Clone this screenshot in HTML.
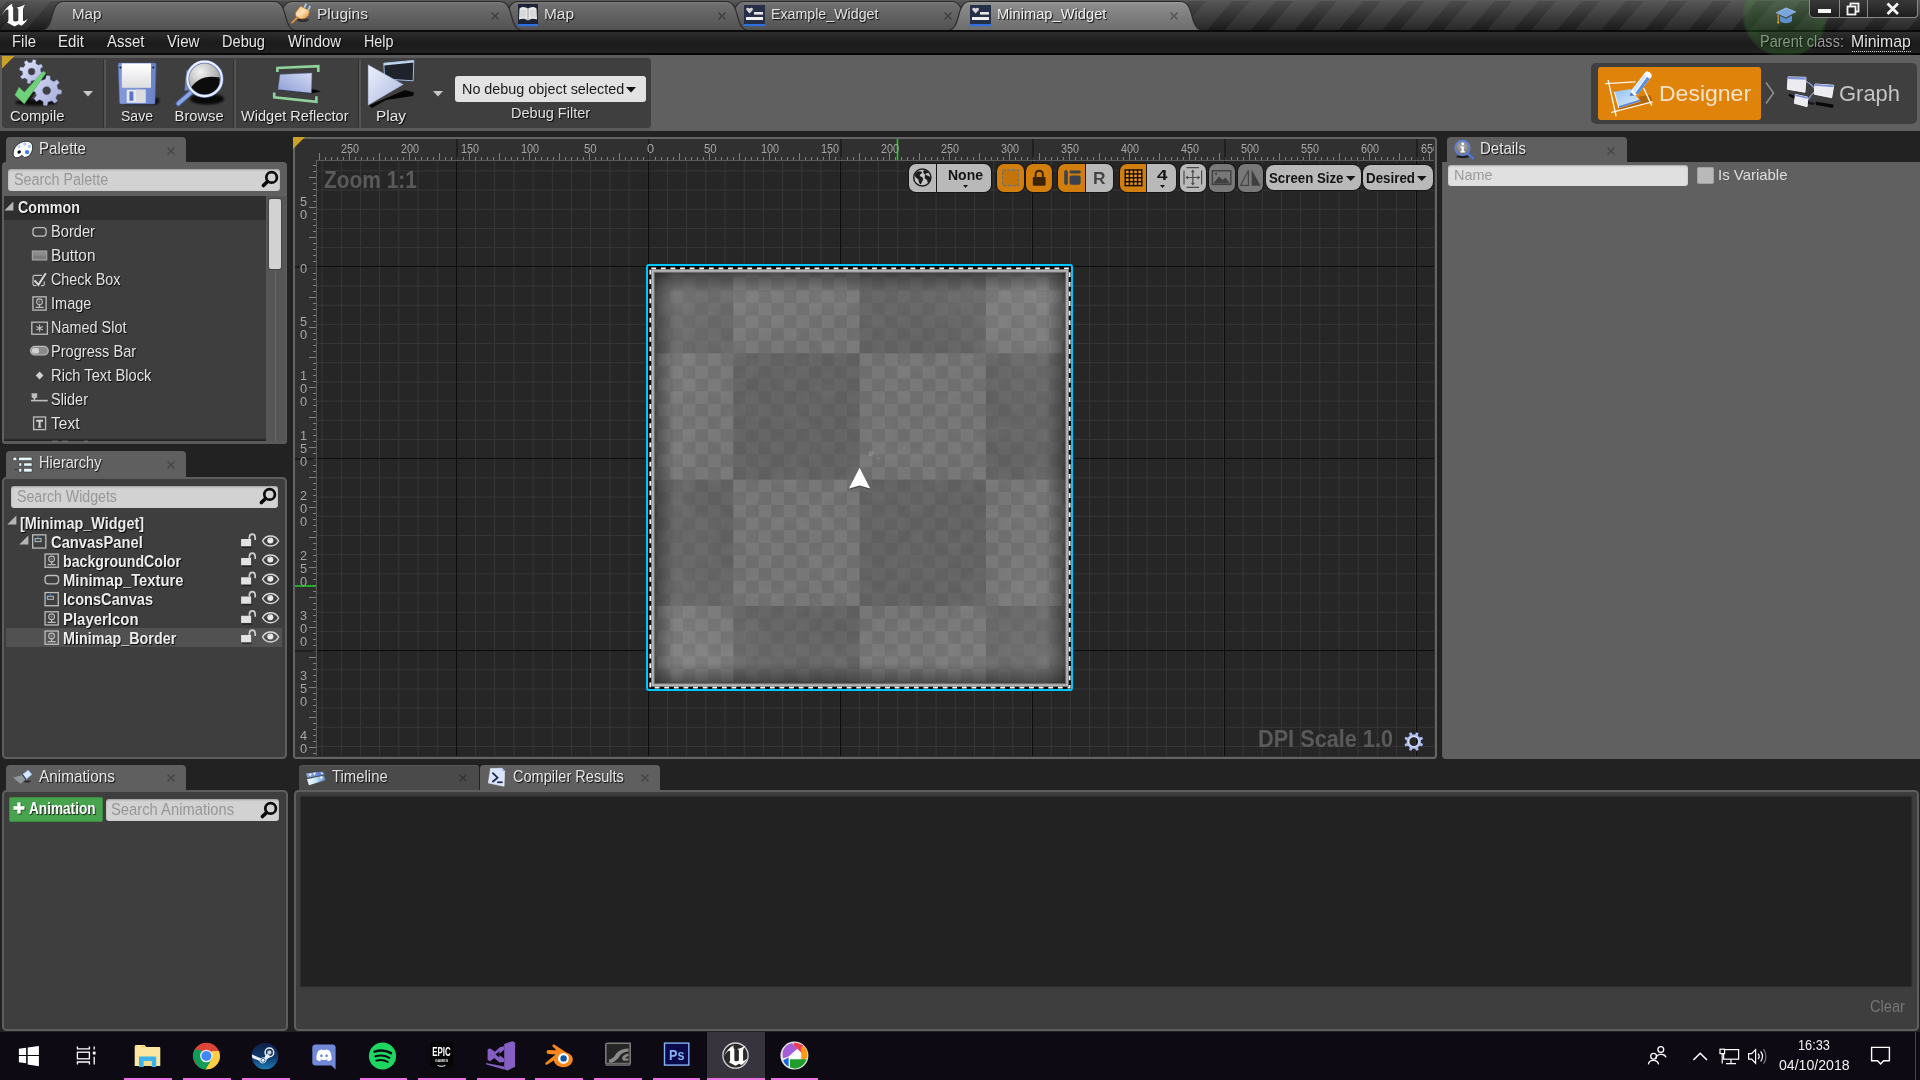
<!DOCTYPE html>
<html lang="en"><head><meta charset="utf-8"><title>Minimap_Widget</title><style>
html,body{margin:0;padding:0}
body{width:1920px;height:1080px;position:relative;overflow:hidden;background:#222;font-family:"Liberation Sans",sans-serif}
.b{position:absolute;box-sizing:border-box}
.t{position:absolute;white-space:pre;transform-origin:0 0;font-family:"Liberation Sans",sans-serif}
svg{position:absolute;overflow:visible}
#root{position:absolute;left:0;top:0;width:1920px;height:1080px;will-change:transform}
</style></head><body><div id="root">
<div class="b" style="left:0px;top:0px;width:1920px;height:30px;background:linear-gradient(#4c4c4c 0,#4a4a4a 6%,#1b1b1b 100%);"></div>
<svg style="left:0;top:0" width="1920" height="30"><defs><pattern id="stp" width="43.75" height="40" patternUnits="userSpaceOnUse" patternTransform="translate(25.6 0) skewX(-40.5)"><rect width="26" height="40" fill="#fff" opacity=".06"/></pattern></defs><rect width="1920" height="30" fill="url(#stp)"/></svg>
<div class="b" style="left:0px;top:0px;width:1920px;height:1px;background:#5a5a5a;"></div>
<svg style="left:0;top:0" width="1920" height="31" viewBox="0 0 1920 31"><defs><linearGradient id="tgi" x1="0" y1="0" x2="0" y2="1"><stop offset="0" stop-color="#7a7a7a"/><stop offset=".12" stop-color="#6e6e6e"/><stop offset="1" stop-color="#515151"/></linearGradient><linearGradient id="tga" x1="0" y1="0" x2="0" y2="1"><stop offset="0" stop-color="#9a9a9a"/><stop offset=".12" stop-color="#8c8c8c"/><stop offset="1" stop-color="#6c6c6c"/></linearGradient></defs><path d="M721.0 30.5 C728.0 30.5 730.5 24 732.5 16 C734.5 8 737.0 1.5 744.0 1.5 H952.0 C959.0 1.5 961.5 8 963.5 16 C965.5 24 968.0 30.5 975.0 30.5 Z" fill="url(#tgi)" stroke="#2b2b2b" stroke-width="1.2"/><path d="M495.0 30.5 C502.0 30.5 504.5 24 506.5 16 C508.5 8 511.0 1.5 518.0 1.5 H726.0 C733.0 1.5 735.5 8 737.5 16 C739.5 24 742.0 30.5 749.0 30.5 Z" fill="url(#tgi)" stroke="#2b2b2b" stroke-width="1.2"/><path d="M269.0 30.5 C276.0 30.5 278.5 24 280.5 16 C282.5 8 285.0 1.5 292.0 1.5 H500.0 C507.0 1.5 509.5 8 511.5 16 C513.5 24 516.0 30.5 523.0 30.5 Z" fill="url(#tgi)" stroke="#2b2b2b" stroke-width="1.2"/><path d="M40.5 30.5 C47.5 30.5 50.0 24 52.0 16 C54.0 8 56.5 1.5 63.5 1.5 H274.0 C281.0 1.5 283.5 8 285.5 16 C287.5 24 290.0 30.5 297.0 30.5 Z" fill="url(#tgi)" stroke="#2b2b2b" stroke-width="1.2"/><path d="M947.0 30.5 C954.0 30.5 956.5 24 958.5 16 C960.5 8 963.0 1.5 970.0 1.5 H1180.5 C1187.5 1.5 1190 8 1192 16 C1194 24 1196.5 30.5 1203.5 30.5 Z" fill="url(#tga)" stroke="#2b2b2b" stroke-width="1.2"/></svg>
<div class="b" style="left:0px;top:30px;width:1920px;height:2px;background:#0a0a0a;"></div>
<span class="t" style="left:71.60px;top:7.45px;font-size:14.49px;line-height:14.49px;color:#e2e2e2;transform:scaleX(1.0458);text-shadow:1px 1px 1px rgba(0,0,0,.9);">Map</span>
<span class="t" style="left:317.10px;top:7.45px;font-size:14.49px;line-height:14.49px;color:#e2e2e2;transform:scaleX(1.0724);text-shadow:1px 1px 1px rgba(0,0,0,.9);">Plugins</span>
<span class="t" style="left:543.60px;top:7.45px;font-size:14.49px;line-height:14.49px;color:#e2e2e2;transform:scaleX(1.0635);text-shadow:1px 1px 1px rgba(0,0,0,.9);">Map</span>
<span class="t" style="left:770.60px;top:7.45px;font-size:14.49px;line-height:14.49px;color:#e2e2e2;transform:scaleX(0.9808);text-shadow:1px 1px 1px rgba(0,0,0,.9);">Example_Widget</span>
<span class="t" style="left:997.10px;top:7.45px;font-size:14.49px;line-height:14.49px;color:#f0f0f0;transform:scaleX(1.0140);text-shadow:1px 1px 1px rgba(0,0,0,.9);">Minimap_Widget</span>
<svg style="left:490px;top:10.5px" width="10" height="10"><path d="M1.5 1.5L8.5 8.5M8.5 1.5L1.5 8.5" stroke="#3e3e3e" stroke-width="1.3" fill="none"/></svg>
<svg style="left:717px;top:10.5px" width="10" height="10"><path d="M1.5 1.5L8.5 8.5M8.5 1.5L1.5 8.5" stroke="#3e3e3e" stroke-width="1.3" fill="none"/></svg>
<svg style="left:943px;top:10.5px" width="10" height="10"><path d="M1.5 1.5L8.5 8.5M8.5 1.5L1.5 8.5" stroke="#3e3e3e" stroke-width="1.3" fill="none"/></svg>
<svg style="left:1169px;top:10.5px" width="10" height="10"><path d="M1.5 1.5L8.5 8.5M8.5 1.5L1.5 8.5" stroke="#505050" stroke-width="1.3" fill="none"/></svg>
<div class="b" style="left:1742px;top:-28px;width:86px;height:86px;background:radial-gradient(circle closest-side,rgba(55,140,45,.22) 0,rgba(55,140,45,.22) 70%,rgba(60,150,50,.27) 90%,rgba(60,140,50,.2) 96%,rgba(60,140,50,0) 100%);border-radius:50%;clip-path:inset(0 0 27px 0)"></div>
<div class="b" style="left:1809px;top:-2px;width:31px;height:20px;background:linear-gradient(#3a3a3a,#1e1e1e);border:1.5px solid #8a8a8a;border-radius:0 0 0 4px"></div>
<div class="b" style="left:1840px;top:-2px;width:28px;height:20px;background:linear-gradient(#3a3a3a,#1e1e1e);border:1.5px solid #8a8a8a;border-left:none"></div>
<div class="b" style="left:1868px;top:-2px;width:50px;height:20px;background:linear-gradient(#3a3a3a,#1e1e1e);border:1.5px solid #8a8a8a;border-left:none;border-radius:0 0 4px 0"></div>
<div class="b" style="left:1818px;top:9px;width:13px;height:4px;background:#f4f4f4;"></div>
<svg style="left:1846px;top:2px" width="16" height="14"><rect x="4.5" y="1.5" width="8" height="8" fill="none" stroke="#f4f4f4" stroke-width="1.8"/><rect x="1.5" y="4.5" width="8" height="8" fill="#2a2a2a" stroke="#f4f4f4" stroke-width="1.8"/></svg>
<svg style="left:1885px;top:2px" width="16" height="14"><path d="M2.5 1.5L13 12M13 1.5L2.5 12" stroke="#f4f4f4" stroke-width="2.8" fill="none"/></svg>
<div class="b" style="left:0px;top:32px;width:1920px;height:22px;background:linear-gradient(#2d2d2d 0,#1d1d1d 45%,#1b1b1b 55%,#222 100%);"></div>
<div class="b" style="left:0px;top:53px;width:1920px;height:2px;background:#070707;"></div>
<span class="t" style="left:11.60px;top:33.92px;font-size:16.56px;line-height:16.56px;color:#e6e6e6;transform:scaleX(0.8993);text-shadow:1px 1px 1px rgba(0,0,0,.9);">File</span>
<span class="t" style="left:58.10px;top:33.92px;font-size:16.56px;line-height:16.56px;color:#e6e6e6;transform:scaleX(0.9110);text-shadow:1px 1px 1px rgba(0,0,0,.9);">Edit</span>
<span class="t" style="left:107.10px;top:33.92px;font-size:16.56px;line-height:16.56px;color:#e6e6e6;transform:scaleX(0.9053);text-shadow:1px 1px 1px rgba(0,0,0,.9);">Asset</span>
<span class="t" style="left:167.10px;top:33.92px;font-size:16.56px;line-height:16.56px;color:#e6e6e6;transform:scaleX(0.9129);text-shadow:1px 1px 1px rgba(0,0,0,.9);">View</span>
<span class="t" style="left:222.10px;top:33.92px;font-size:16.56px;line-height:16.56px;color:#e6e6e6;transform:scaleX(0.8811);text-shadow:1px 1px 1px rgba(0,0,0,.9);">Debug</span>
<span class="t" style="left:288.10px;top:33.92px;font-size:16.56px;line-height:16.56px;color:#e6e6e6;transform:scaleX(0.8997);text-shadow:1px 1px 1px rgba(0,0,0,.9);">Window</span>
<span class="t" style="left:364.10px;top:33.92px;font-size:16.56px;line-height:16.56px;color:#e6e6e6;transform:scaleX(0.8661);text-shadow:1px 1px 1px rgba(0,0,0,.9);">Help</span>
<span class="t" style="left:1760.10px;top:33.92px;font-size:16.56px;line-height:16.56px;color:#9a9a9a;transform:scaleX(0.8774);text-shadow:1px 1px 1px rgba(0,0,0,.9);">Parent class:</span>
<span class="t" style="left:1851.10px;top:34.42px;font-size:16.56px;line-height:16.56px;color:#e0e0e0;transform:scaleX(0.9587);text-shadow:1px 1px 1px rgba(0,0,0,.9);">Minimap</span>
<div class="b" style="left:1852px;top:51px;width:59px;height:1px;background:transparent;border-top:1px dotted #cfcfcf"></div>
<div class="b" style="left:1742px;top:-28px;width:86px;height:86px;background:radial-gradient(circle closest-side,rgba(55,140,45,.2) 0,rgba(55,140,45,.2) 70%,rgba(60,150,50,.25) 90%,rgba(60,140,50,.18) 96%,rgba(60,140,50,0) 100%);border-radius:50%;clip-path:inset(59px 0 0 0)"></div>
<div class="b" style="left:0px;top:54.6px;width:1920px;height:76.4px;background:#5c5c5c;"></div>
<div class="b" style="left:651px;top:54.6px;width:1269px;height:76.4px;background:#606060;"></div>
<div class="b" style="left:2px;top:57.6px;width:648.5px;height:70.6px;background:#3f3f3f;border-radius:4px"></div>
<div class="b" style="left:102.5px;top:58.5px;width:3.2px;height:69px;background:#545454;border-radius:1.6px;border-left:1px solid #303030"></div>
<div class="b" style="left:232.5px;top:58.5px;width:3.2px;height:69px;background:#545454;border-radius:1.6px;border-left:1px solid #303030"></div>
<div class="b" style="left:357.5px;top:58.5px;width:3.2px;height:69px;background:#545454;border-radius:1.6px;border-left:1px solid #303030"></div>
<svg style="left:2px;top:55.5px" width="13" height="13"><path d="M0 0H12.5L0 12.5Z" fill="#c9a227"/></svg>
<span class="t" style="left:10.10px;top:109.35px;font-size:14.7px;line-height:14.7px;color:#e6e6e6;transform:scaleX(1.0116);text-shadow:1px 1px 1px rgba(0,0,0,.95);">Compile</span>
<span class="t" style="left:121.10px;top:109.35px;font-size:14.7px;line-height:14.7px;color:#e6e6e6;transform:scaleX(0.9558);text-shadow:1px 1px 1px rgba(0,0,0,.95);">Save</span>
<span class="t" style="left:174.60px;top:109.35px;font-size:14.7px;line-height:14.7px;color:#e6e6e6;text-shadow:1px 1px 1px rgba(0,0,0,.95);">Browse</span>
<span class="t" style="left:241.10px;top:109.35px;font-size:14.7px;line-height:14.7px;color:#e6e6e6;transform:scaleX(0.9902);text-shadow:1px 1px 1px rgba(0,0,0,.95);">Widget Reflector</span>
<span class="t" style="left:376.10px;top:109.35px;font-size:14.7px;line-height:14.7px;color:#e6e6e6;transform:scaleX(1.0500);text-shadow:1px 1px 1px rgba(0,0,0,.95);">Play</span>
<svg style="left:82.5px;top:90.75px" width="10" height="5.5"><path d="M0 0H10L5.0 5.5Z" fill="#c8c8c8"/></svg>
<svg style="left:433.0px;top:90.75px" width="10" height="5.5"><path d="M0 0H10L5.0 5.5Z" fill="#c8c8c8"/></svg>
<div class="b" style="left:454.5px;top:76px;width:191.5px;height:26px;background:#e2e2e2;border-radius:3px"></div>
<span class="t" style="left:461.60px;top:81.04px;font-size:15.52px;line-height:15.52px;color:#1a1a1a;transform:scaleX(0.9261);">No debug object selected</span>
<svg style="left:626.0px;top:86.75px" width="10" height="5.5"><path d="M0 0H10L5.0 5.5Z" fill="#111"/></svg>
<span class="t" style="left:510.60px;top:106.25px;font-size:14.9px;line-height:14.9px;color:#e0e0e0;transform:scaleX(0.9751);text-shadow:1px 1px 1px rgba(0,0,0,.95);">Debug Filter</span>
<div class="b" style="left:1591px;top:62.5px;width:325.5px;height:61.5px;background:#3f3f3f;border-radius:5px"></div>
<div class="b" style="left:1598px;top:67px;width:162.5px;height:53px;background:#e0830b;border-radius:3px"></div>
<span class="t" style="left:1658.60px;top:81.81px;font-size:22.77px;line-height:22.77px;color:#f3e3c8;transform:scaleX(1.0105);">Designer</span>
<svg style="left:1764px;top:81px" width="12" height="24"><path d="M2 1.5L9.5 12L2 22.5" stroke="#8c8c8c" stroke-width="1.6" fill="none"/></svg>
<span class="t" style="left:1839.10px;top:81.81px;font-size:22.77px;line-height:22.77px;color:#c4c4c4;transform:scaleX(0.9648);">Graph</span>
<svg style="left:0;top:0" width="1920" height="134" viewBox="0 0 1920 134"><defs><linearGradient id="gG1" x1="0" y1="0" x2="1" y2="1"><stop offset="0" stop-color="#e6eafc"/><stop offset="1" stop-color="#a9b1dd"/></linearGradient><linearGradient id="gG2" x1="0" y1="0" x2="1" y2="1"><stop offset="0" stop-color="#d3d8f4"/><stop offset="1" stop-color="#a3abd8"/></linearGradient><linearGradient id="gFl" x1="0" y1="0" x2="1" y2="0"><stop offset="0" stop-color="#8199d8"/><stop offset=".5" stop-color="#7c94d6"/><stop offset="1" stop-color="#6a82c6"/></linearGradient><linearGradient id="gLb" x1="0" y1="0" x2="0" y2="1"><stop offset="0" stop-color="#ffffff"/><stop offset="1" stop-color="#dedee2"/></linearGradient><radialGradient id="gLens" cx=".38" cy=".3" r=".75"><stop offset="0" stop-color="#f2f2f2"/><stop offset=".55" stop-color="#bcbcbc"/><stop offset="1" stop-color="#8a8a8a"/></radialGradient><linearGradient id="gWr" x1="0" y1="1" x2="1" y2="0"><stop offset="0" stop-color="#8b9bd6"/><stop offset="1" stop-color="#d4daf4"/></linearGradient><linearGradient id="gPl" x1="0" y1="0" x2="1" y2="1"><stop offset="0" stop-color="#eef2fc"/><stop offset="1" stop-color="#a9b6de"/></linearGradient><linearGradient id="gPg" x1="0" y1="0" x2="1" y2="1"><stop offset="0" stop-color="#f6c07c"/><stop offset=".5" stop-color="#ffe2b8"/><stop offset="1" stop-color="#e08a2c"/></linearGradient><linearGradient id="gPap" x1="0" y1="0" x2="1" y2="1"><stop offset="0" stop-color="#8fc0f0"/><stop offset="1" stop-color="#e4f0fc"/></linearGradient><filter id="bl1"><feGaussianBlur stdDeviation="1.2"/></filter><filter id="bl05"><feGaussianBlur stdDeviation="0.6"/></filter></defs><path d="M1 16.5C3.5 11 7.5 6 12.5 3.4C11.8 5 12 6.5 13.2 7.6L13.2 20.5C14.5 21.8 16.5 21.8 18.3 20.6L18.3 9C17.8 8.3 17 7.9 16.4 7.7C19.5 7.2 23 5.8 26 3.8C24 6 23 8 23 10L23 20.5C23.5 21.5 24.5 21 27.8 18.4C26 22 23.5 24.5 21 25.7L18.6 24.3L14.6 26.6L7 22.6C8 22 8.4 21.2 8.4 20L8.4 10.5C8.4 9.5 7.8 9.3 7 9.6C5 10.5 3 13 1 16.5Z" fill="#fff" stroke="#1a1a1a" stroke-width=".6" paint-order="stroke"/><g><ellipse cx="303" cy="20" rx="6" ry="2" fill="#000" opacity=".45" filter="url(#bl05)"/><path d="M304.5 7.5L306 4.2" stroke="#a8d0f4" stroke-width="1.7" stroke-linecap="round"/><path d="M308.3 9.8L309.9 6.4" stroke="#a8d0f4" stroke-width="1.7" stroke-linecap="round"/><path d="M300.6 6.2L309.2 10.6C309.6 14.2 307.6 17.6 304.4 18.6C301.2 19.4 298.2 18.4 296.4 16.4C295 14.8 295.2 13.2 296 12Z" fill="url(#gPg)" stroke="#c27422" stroke-width=".6"/><path d="M297.6 17.2L292 22.6" stroke="#e08f3c" stroke-width="1.9" stroke-linecap="round"/></g><g><rect x="518" y="4" width="20" height="20" fill="#1c2336"/><rect x="518" y="24" width="20" height="2.2" fill="#2f6fe0"/><path d="M519.5 8.5C522 6.5 525 6.6 528 8.6C531 6.6 534 6.5 536.5 8.5L537 19.5C534 18.2 531 18.4 528 20.4C525 18.4 522 18.2 519 19.5Z" fill="#e8e8e8"/><path d="M528 8.6V20.4" stroke="#888" stroke-width=".8"/><path d="M521 10.5V17.5M523 9.8V17M525 9.8V17.6M531 9.8V17.6M533 9.8V17M535 10.5V17.5" stroke="#b5b5b5" stroke-width=".6"/></g><g transform="translate(744 5)"><rect width="21" height="19" fill="#262f48"/><rect y="19" width="21" height="2.2" fill="#2f6fe0"/><path d="M5.6 8.4L2.6 5.2C1.4 3.6 3.4 1.6 5.6 3.6C7.8 1.6 9.8 3.6 8.6 5.2Z" fill="#d8d8d8"/><rect x="10" y="7" width="9" height="2.6" fill="#e4e4e4"/><rect x="2" y="12" width="17" height="3" fill="#f0f0f0"/></g><g transform="translate(970 5)"><rect width="21" height="19" fill="#262f48"/><rect y="19" width="21" height="2.2" fill="#2f6fe0"/><path d="M5.6 8.4L2.6 5.2C1.4 3.6 3.4 1.6 5.6 3.6C7.8 1.6 9.8 3.6 8.6 5.2Z" fill="#d8d8d8"/><rect x="10" y="7" width="9" height="2.6" fill="#e4e4e4"/><rect x="2" y="12" width="17" height="3" fill="#f0f0f0"/></g><g><path d="M1776 13L1786 8L1796 12L1786 17.5Z" fill="#7aa6e0"/><path d="M1780 16V21C1783 24 1789 24 1792 21V15.5L1786 18.8Z" fill="#5f8fd0"/><path d="M1776 13L1786 8L1796 12" fill="none" stroke="#a9c8f0" stroke-width=".8"/><path d="M1778.2 14.2V22" stroke="#d8a83a" stroke-width="1.1"/><circle cx="1778.2" cy="22.6" r="1.1" fill="#d8a83a"/></g><ellipse cx="36" cy="102.5" rx="21" ry="3.2" fill="#000" opacity=".8" filter="url(#bl1)"/><path d="M40.79 71.91 L43.71 73.11 L42.95 76.08 L39.82 75.73 L37.88 78.32 L39.09 81.23 L36.46 82.79 L34.49 80.33 L31.29 80.79 L30.09 83.71 L27.12 82.95 L27.47 79.82 L24.88 77.88 L21.97 79.09 L20.41 76.46 L22.87 74.49 L22.41 71.29 L19.49 70.09 L20.25 67.12 L23.38 67.47 L25.32 64.88 L24.11 61.97 L26.74 60.41 L28.71 62.87 L31.91 62.41 L33.11 59.49 L36.08 60.25 L35.73 63.38 L38.32 65.32 L41.23 64.11 L42.79 66.74 L40.33 68.71Z M35.20 71.60 A3.6 3.6 0 1 0 28.00 71.60 A3.6 3.6 0 1 0 35.20 71.60Z" fill="url(#gG1)" fill-rule="evenodd" stroke="#7f89c0" stroke-width=".4"/><path d="M26 99L44 72.5L47.5 75L28 103Z" fill="#000" opacity=".55" filter="url(#bl05)"/><path d="M58.02 89.28 L61.70 90.22 L61.32 93.96 L57.54 94.14 L55.64 97.67 L57.58 100.93 L54.66 103.31 L51.86 100.77 L48.02 101.92 L47.08 105.60 L43.34 105.22 L43.16 101.44 L39.63 99.54 L36.37 101.48 L33.99 98.56 L36.53 95.76 L35.38 91.92 L31.70 90.98 L32.08 87.24 L35.86 87.06 L37.76 83.53 L35.82 80.27 L38.74 77.89 L41.54 80.43 L45.38 79.28 L46.32 75.60 L50.06 75.98 L50.24 79.76 L53.77 81.66 L57.03 79.72 L59.41 82.64 L56.87 85.44Z M50.90 90.60 A4.2 4.2 0 1 0 42.50 90.60 A4.2 4.2 0 1 0 50.90 90.60Z" fill="url(#gG2)" fill-rule="evenodd" stroke="#7f89c0" stroke-width=".4"/><path d="M14.9 95L19.1 87.2L24.3 92.2L43.6 71.1L45.9 73.2L24.3 103.9Z" fill="#6fd17c" stroke="#4aa558" stroke-width=".5"/><path d="M121 104.5L158 104.5L160 99L152 96Z" fill="#000" opacity=".7" filter="url(#bl1)"/><path d="M118.3 64.2C118.3 63.4 119 63 119.8 63H154.6C155.6 63 156.2 63.6 156.1 64.6L155 102.4C155 103.4 154.4 103.9 153.4 103.9H121.2C120.2 103.9 119.6 103.4 119.5 102.4Z" fill="url(#gFl)" stroke="#4e66ad" stroke-width=".5"/><rect x="121.9" y="63.4" width="29.1" height="24.4" fill="url(#gLb)"/><rect x="126.7" y="89.7" width="18.8" height="13" fill="#e9e9ec"/><rect x="129.4" y="91.5" width="4" height="9.3" fill="#5c76c4"/><rect x="136" y="89.7" width="9.5" height="13" fill="#dcdce0"/><circle cx="120.4" cy="67.4" r="1" fill="#1a1a2a"/><circle cx="153.3" cy="67.4" r="1" fill="#1a1a2a"/><ellipse cx="207" cy="99" rx="17" ry="5.5" fill="#000" opacity=".85" filter="url(#bl1)"/><path d="M186.5 70L221.5 69L222 76L220 90L184.5 90.5Z" fill="#7289cc"/><path d="M190.9 92.4L178.4 103.6" stroke="#4e66ad" stroke-width="5.4" stroke-linecap="round"/><path d="M190.9 92.4L178.4 103.6" stroke="#8fa6e4" stroke-width="3.4" stroke-linecap="round"/><circle cx="204.6" cy="78.9" r="17" fill="url(#gLens)"/><path d="M190.5 88.5C195.5 79.5 206 74.5 219.5 77.5C221 86 215.5 95 205.5 95.8C199 96 193.5 93 190.5 88.5Z" fill="#0c0c0c"/><circle cx="204.6" cy="78.9" r="17.2" fill="none" stroke="#5b73ba" stroke-width="3.6"/><circle cx="204.6" cy="78.9" r="17.2" fill="none" stroke="#eef2ff" stroke-width="2.2"/><path d="M279 90L311 93.6L321 91.6L315 89.5L282 86Z" fill="#000" opacity=".9" filter="url(#bl05)"/><path d="M280 74.4L311.9 73.1L311.3 93.1L278.1 89.4Z" fill="url(#gWr)" stroke="#6f80c0" stroke-width=".4"/><path d="M277.4 72V68L318.3 66.2V72" fill="none" stroke="#8fd39b" stroke-width="2.6"/><path d="M274.2 92.5V97.3L316.4 101.7V96.3" fill="none" stroke="#8fd39b" stroke-width="2.6"/><path d="M369 105.5L405 90L414 92.5L413 96L386 100L372 108Z" fill="#000" opacity=".9" filter="url(#bl05)"/><path d="M383.8 63.2L413.8 60.4L413.2 80.8L384.6 79Z" fill="#1f232b" stroke="#9dbbe6" stroke-width="1"/><path d="M383.8 63.2L413.8 60.4L413.7 62.6L383.9 65.4Z" fill="#c2d6f2"/><path d="M368.1 64.8L403.3 84.4L368.1 105.2Z" fill="url(#gPl)" stroke="#8f9ccc" stroke-width=".4"/><path d="M1639 96.5L1650.5 95L1652.5 101.4L1641.6 104.6Z" fill="#8a4a04" opacity=".55" filter="url(#bl05)"/><path d="M1619 108.6L1640.6 102L1641.6 104.4L1620 111Z" fill="#8a4a04" opacity=".5" filter="url(#bl05)"/><path d="M1614.3 91.8L1630.4 89L1640.4 101.2L1618.8 107.9Z" fill="url(#gPap)"/><path d="M1618.8 107.9L1640.4 101.2L1640.2 99.6L1618.4 106.2Z" fill="#5a88d8"/><path d="M1614.3 91.8L1618.8 107.9" stroke="#f2f8ff" stroke-width="1"/><g stroke="#fdf6ea" stroke-width="1.35" fill="none" stroke-linecap="round"><path d="M1605.7 83.7L1634.9 81.8"/><path d="M1608.2 80.4L1616 115.7"/><path d="M1611.6 112.3L1652.1 101.8"/><path d="M1643.8 88.4L1651.6 105.1"/></g><path d="M1629.6 96L1631.4 90.2L1645.4 72.2C1647.2 70 1653.2 74.2 1651.4 76.8L1637.6 94.6Z" fill="#fff"/><path d="M1635.2 93.2L1637.8 94.6L1651.4 76.8C1652.2 75.6 1651.2 74.2 1649.6 73.2Z" fill="#5b8fe2"/><path d="M1632 90L1634.6 92.6L1648.4 73.4L1646.2 72.4Z" fill="#cfe4fb"/><path d="M1629.6 96L1630.8 92.2L1634.4 95.4Z" fill="#4a78d0"/><path d="M1643.6 74.4L1645.4 72.2C1647.2 70 1653.2 74.2 1651.4 76.8L1649.8 78.8Z" fill="#fff"/><path d="M1815.5 101.5L1833.5 104.5L1833 108L1816 105Z" fill="#000" opacity=".85" filter="url(#bl05)"/><path d="M1789 93.5L1796 96.5L1794.5 99L1788.5 96Z" fill="#000" opacity=".8" filter="url(#bl05)"/><path d="M1807.5 101L1815 103L1814 105L1807.5 104Z" fill="#000" opacity=".6" filter="url(#bl05)"/><g stroke="#8495cc" stroke-width="1.4" fill="none"><path d="M1805.6 81.4C1810 82.4 1812 86 1815 88.6"/><path d="M1814.6 92C1811 94 1810 98 1807.8 100"/></g><path d="M1788.1 76.9L1806 77.3L1805 92.3L1787.3 89.2Z" fill="#ececf0" stroke="#fafaff" stroke-width=".9"/><path d="M1788.1 76.9L1806 77.3L1805.8 79.8L1788.0 79.0Z" fill="#7b91da"/><path d="M1815 84L1833.75 85.2L1831.7 97.7L1814.2 94.2Z" fill="#ececf0" stroke="#fafaff" stroke-width=".9"/><path d="M1815 84L1833.75 85.2L1833.4 87.3L1814.9 85.7Z" fill="#7b91da"/><path d="M1795.4 94.4L1807.7 97.1L1807.1 106.7L1794.4 103.3Z" fill="#ececf0" stroke="#fafaff" stroke-width=".9"/><path d="M1795.4 94.4L1807.7 97.1L1807.6 98.7L1795.2 95.9Z" fill="#7b91da"/></svg>
<div class="b" style="left:6px;top:137px;width:180px;height:25px;background:#5f5f5f;border-radius:4px 4px 0 0;"></div>
<span class="t" style="left:39.10px;top:140.92px;font-size:16.56px;line-height:16.56px;color:#e8e8e8;transform:scaleX(0.9115);text-shadow:1px 1px 1px rgba(0,0,0,.9);">Palette</span>
<svg style="left:165.5px;top:145.5px" width="10" height="10"><path d="M1.5 1.5L8.5 8.5M8.5 1.5L1.5 8.5" stroke="#444" stroke-width="1.3" fill="none"/></svg>
<div class="b" style="left:1.6px;top:162px;width:285.6px;height:282.4px;background:#5f5f5f;border-radius:4px"></div>
<div class="b" style="left:8.2px;top:169px;width:272px;height:21.5px;background:#d2d2d2;border-radius:3px;box-shadow:inset 0 1px 2px rgba(0,0,0,.25)"></div><span class="t" style="left:14.30px;top:172.22px;font-size:16.56px;line-height:16.56px;color:#979797;transform:scaleX(0.8680);">Search Palette</span><svg style="left:260.2px;top:169.25px" width="20" height="20"><circle cx="11.6" cy="8.4" r="5.3" fill="none" stroke="#0a0a0a" stroke-width="2.7"/><path d="M7.6 12.4L3.4 16.6" stroke="#0a0a0a" stroke-width="3.6" stroke-linecap="round"/></svg>
<div class="b" style="left:3.5px;top:196px;width:262px;height:245px;background:#3e3e3e;"></div>
<div class="b" style="left:3.5px;top:196px;width:262px;height:24px;background:#2f2f2f;"></div>
<div class="b" style="left:265.5px;top:196px;width:20px;height:245px;background:#565656;"></div>
<div class="b" style="left:275px;top:268px;width:1px;height:173px;background:#6a6a6a;"></div>
<div class="b" style="left:269px;top:199px;width:12px;height:70px;background:#d2d2d2;border-radius:2px;box-shadow:0 0 0 1px #444"></div>
<svg style="left:4.2px;top:200.8px" width="10" height="10"><path d="M9.4 .6V9.4H.4Z" fill="#b6b6b6"/></svg>
<span class="t" style="left:17.60px;top:200.23px;font-size:15.94px;line-height:15.94px;color:#ececec;transform:scaleX(0.8978);font-weight:bold;text-shadow:1px 1px 1px rgba(0,0,0,.9);">Common</span>
<span class="t" style="left:51.10px;top:224.02px;font-size:16.56px;line-height:16.56px;color:#e4e4e4;transform:scaleX(0.8851);text-shadow:1px 1px 1px rgba(0,0,0,.9);">Border</span>
<span class="t" style="left:51.10px;top:248.02px;font-size:16.56px;line-height:16.56px;color:#e4e4e4;transform:scaleX(0.9294);text-shadow:1px 1px 1px rgba(0,0,0,.9);">Button</span>
<span class="t" style="left:51.10px;top:272.02px;font-size:16.56px;line-height:16.56px;color:#e4e4e4;transform:scaleX(0.8678);text-shadow:1px 1px 1px rgba(0,0,0,.9);">Check Box</span>
<span class="t" style="left:51.10px;top:296.02px;font-size:16.56px;line-height:16.56px;color:#e4e4e4;transform:scaleX(0.8798);text-shadow:1px 1px 1px rgba(0,0,0,.9);">Image</span>
<span class="t" style="left:51.10px;top:320.02px;font-size:16.56px;line-height:16.56px;color:#e4e4e4;transform:scaleX(0.8725);text-shadow:1px 1px 1px rgba(0,0,0,.9);">Named Slot</span>
<span class="t" style="left:51.10px;top:344.02px;font-size:16.56px;line-height:16.56px;color:#e4e4e4;transform:scaleX(0.8821);text-shadow:1px 1px 1px rgba(0,0,0,.9);">Progress Bar</span>
<span class="t" style="left:51.10px;top:368.02px;font-size:16.56px;line-height:16.56px;color:#e4e4e4;transform:scaleX(0.8901);text-shadow:1px 1px 1px rgba(0,0,0,.9);">Rich Text Block</span>
<span class="t" style="left:51.10px;top:392.02px;font-size:16.56px;line-height:16.56px;color:#e4e4e4;transform:scaleX(0.8738);text-shadow:1px 1px 1px rgba(0,0,0,.9);">Slider</span>
<span class="t" style="left:51.10px;top:416.02px;font-size:16.56px;line-height:16.56px;color:#e4e4e4;transform:scaleX(0.9383);text-shadow:1px 1px 1px rgba(0,0,0,.9);">Text</span>
<div class="b" style="left:3.5px;top:438px;width:262px;height:3px;background:linear-gradient(rgba(0,0,0,0),rgba(0,0,0,.55));"></div>
<div class="b" style="left:2px;top:441px;width:285px;height:3px;background:#5a5a5a;border-radius:0 0 3px 3px"></div>
<div class="b" style="left:6px;top:451px;width:180px;height:26px;background:#5f5f5f;border-radius:4px 4px 0 0;"></div>
<span class="t" style="left:39.10px;top:454.92px;font-size:16.56px;line-height:16.56px;color:#e8e8e8;transform:scaleX(0.8819);text-shadow:1px 1px 1px rgba(0,0,0,.9);">Hierarchy</span>
<svg style="left:165.5px;top:459.5px" width="10" height="10"><path d="M1.5 1.5L8.5 8.5M8.5 1.5L1.5 8.5" stroke="#444" stroke-width="1.3" fill="none"/></svg>
<div class="b" style="left:2px;top:476.5px;width:285px;height:282.5px;background:#3e3e3e;border:2.5px solid #5e5e5e;border-radius:4.5px;"></div>
<div class="b" style="left:10.5px;top:486px;width:267px;height:21.5px;background:#d2d2d2;border-radius:3px;box-shadow:inset 0 1px 2px rgba(0,0,0,.25)"></div><span class="t" style="left:16.60px;top:488.82px;font-size:16.56px;line-height:16.56px;color:#979797;transform:scaleX(0.8554);">Search Widgets</span><svg style="left:257.5px;top:486.25px" width="20" height="20"><circle cx="11.6" cy="8.4" r="5.3" fill="none" stroke="#0a0a0a" stroke-width="2.7"/><path d="M7.6 12.4L3.4 16.6" stroke="#0a0a0a" stroke-width="3.6" stroke-linecap="round"/></svg>
<div class="b" style="left:6px;top:628px;width:276px;height:19px;background:#515151;"></div>
<svg style="left:6.6px;top:515px" width="10" height="10"><path d="M9.4 .6V9.4H.4Z" fill="#b6b6b6"/></svg>
<svg style="left:18.6px;top:534.6px" width="10" height="10"><path d="M9.4 .6V9.4H.4Z" fill="#b6b6b6"/></svg>
<span class="t" style="left:19.60px;top:515.53px;font-size:15.94px;line-height:15.94px;color:#ececec;transform:scaleX(0.9045);font-weight:bold;text-shadow:1px 1px 1px rgba(0,0,0,.9);">[Minimap_Widget]</span>
<span class="t" style="left:50.85px;top:534.93px;font-size:15.94px;line-height:15.94px;color:#ececec;transform:scaleX(0.9247);font-weight:bold;text-shadow:1px 1px 1px rgba(0,0,0,.9);">CanvasPanel</span>
<span class="t" style="left:63.10px;top:553.93px;font-size:15.94px;line-height:15.94px;color:#ececec;transform:scaleX(0.8885);font-weight:bold;text-shadow:1px 1px 1px rgba(0,0,0,.9);">backgroundColor</span>
<span class="t" style="left:63.10px;top:573.18px;font-size:15.94px;line-height:15.94px;color:#ececec;transform:scaleX(0.9277);font-weight:bold;text-shadow:1px 1px 1px rgba(0,0,0,.9);">Minimap_Texture</span>
<span class="t" style="left:63.10px;top:592.43px;font-size:15.94px;line-height:15.94px;color:#ececec;transform:scaleX(0.9153);font-weight:bold;text-shadow:1px 1px 1px rgba(0,0,0,.9);">IconsCanvas</span>
<span class="t" style="left:63.10px;top:611.68px;font-size:15.94px;line-height:15.94px;color:#ececec;transform:scaleX(0.9366);font-weight:bold;text-shadow:1px 1px 1px rgba(0,0,0,.9);">PlayerIcon</span>
<span class="t" style="left:63.10px;top:630.93px;font-size:15.94px;line-height:15.94px;color:#ececec;transform:scaleX(0.9006);font-weight:bold;text-shadow:1px 1px 1px rgba(0,0,0,.9);">Minimap_Border</span>
<div class="b" style="left:6px;top:764.5px;width:180px;height:26px;background:#5f5f5f;border-radius:4px 4px 0 0;"></div>
<span class="t" style="left:39.10px;top:768.92px;font-size:16.56px;line-height:16.56px;color:#e8e8e8;transform:scaleX(0.9276);text-shadow:1px 1px 1px rgba(0,0,0,.9);">Animations</span>
<svg style="left:165.5px;top:772.5px" width="10" height="10"><path d="M1.5 1.5L8.5 8.5M8.5 1.5L1.5 8.5" stroke="#444" stroke-width="1.3" fill="none"/></svg>
<div class="b" style="left:2px;top:789.7px;width:286px;height:241.4px;background:#3e3e3e;border:2.5px solid #5e5e5e;border-radius:4.5px;"></div>
<div class="b" style="left:8.75px;top:797px;width:94.25px;height:25px;background:#48a34e;border-radius:2px;box-shadow:inset 0 0 0 1px rgba(0,0,0,.15)"></div>
<svg style="left:12px;top:801px" width="14" height="14"><path d="M7 1.5V12.5M1.5 7H12.5" stroke="#111" stroke-width="3" transform="translate(1 1)" opacity=".6"/><path d="M7 1.5V12.5M1.5 7H12.5" stroke="#fff" stroke-width="3.3"/></svg>
<span class="t" style="left:28.60px;top:801.28px;font-size:15.84px;line-height:15.84px;color:#fff;transform:scaleX(0.8603);font-weight:bold;text-shadow:1px 1px 1px rgba(0,0,0,.8);">Animation</span>
<div class="b" style="left:105.5px;top:799px;width:173.25px;height:22px;background:#d2d2d2;border-radius:3px;box-shadow:inset 0 1px 2px rgba(0,0,0,.25)"></div><span class="t" style="left:111.10px;top:802.12px;font-size:16.56px;line-height:16.56px;color:#979797;transform:scaleX(0.8925);">Search Animations</span><svg style="left:258.75px;top:799.5px" width="20" height="20"><circle cx="11.6" cy="8.4" r="5.3" fill="none" stroke="#0a0a0a" stroke-width="2.7"/><path d="M7.6 12.4L3.4 16.6" stroke="#0a0a0a" stroke-width="3.6" stroke-linecap="round"/></svg>
<svg style="left:0;top:0" width="300" height="1032" viewBox="0 0 300 1032"><rect x="32.949999999999996" y="227.55" width="13.2" height="8.5" rx="3" fill="none" stroke="#bdbdbd" stroke-width="1.3"/><rect x="32.3" y="251" width="14.5" height="9" fill="#8c8c8c" stroke="#a9a9a9" stroke-width="1"/><rect x="33.3" y="255.5" width="12.5" height="3.6" fill="#7c7c7c"/><path d="M42 275.3H34.6C33.4 275.3 33 275.9 33 276.9V284.1C33 285.1 33.5 285.7 34.6 285.7H36.4M41 285.7H42.8C43.8 285.7 44.3 285.1 44.3 284.1V281.4" fill="none" stroke="#bdbdbd" stroke-width="1.2"/><path d="M34.5 280.3L38.4 284.8L45.8 273.3" fill="none" stroke="#dadada" stroke-width="1.9"/><g transform="translate(32.3 296.2) scale(1.0)" fill="none" stroke="#bdbdbd" stroke-width="1.3"><rect x=".65" y=".65" width="13.2" height="13.2"/><circle cx="7.2" cy="5.6" r="2.9" stroke-width="1.1"/><path d="M7.2 8.4V11M3.2 11.2H11.3" stroke-width="1.2"/><path d="M5.8 5.6H8.6M7.2 4.2V7" stroke-width=".6" opacity=".7"/></g><rect x="31.8" y="322.2" width="15.6" height="12" fill="none" stroke="#bdbdbd" stroke-width="1.3"/><path d="M39.6 324.6V331.8M36.4 326.4L42.8 330M42.8 326.4L36.4 330" stroke="#bdbdbd" stroke-width="1.1"/><rect x="30.6" y="346.4" width="17.6" height="8.6" rx="4.3" fill="#8a8a8a" stroke="#bdbdbd" stroke-width="1.2"/><rect x="32" y="348" width="7" height="5.4" rx="2" fill="#d0d0d0"/><path d="M39.6 371.6L43.4 375.5L39.6 379.4L35.8 375.5Z" fill="#d2d2d2"/><path d="M31 400.6H47.8" stroke="#bdbdbd" stroke-width="1.6"/><path d="M31.6 393.2H37.2V397.2L35.4 398.4H33.4L31.6 397.2Z" fill="#bdbdbd"/><path d="M34.4 398V400" stroke="#bdbdbd" stroke-width="1.4"/><rect x="33.6" y="417" width="12" height="12.6" fill="none" stroke="#bdbdbd" stroke-width="1.3"/><path d="M36.2 420.8H43M39.6 420.8V427" stroke="#d0d0d0" stroke-width="2"/><path d="M38 427H41.2" stroke="#d0d0d0" stroke-width="1.2"/><path d="M52 441.2H58M62 441.2H68M84 441.2H88" stroke="#7a7a7a" stroke-width="1"/><g transform="translate(32 534.2)"><rect x=".65" y=".65" width="13.2" height="13.2" fill="none" stroke="#bdbdbd" stroke-width="1.3"/><rect x="3.2" y="4.4" width="5.8" height="3" fill="none" stroke="#bdbdbd" stroke-width="1"/><rect x="5.4" y="2.2" width="1.3" height="2" fill="#2f86e6"/><rect x="1.6" y="5.4" width="1.6" height="1.1" fill="#2f86e6"/></g><g transform="translate(44.4 553.4) scale(1.0)" fill="none" stroke="#bdbdbd" stroke-width="1.3"><rect x=".65" y=".65" width="13.2" height="13.2"/><circle cx="7.2" cy="5.6" r="2.9" stroke-width="1.1"/><path d="M7.2 8.4V11M3.2 11.2H11.3" stroke-width="1.2"/><path d="M5.8 5.6H8.6M7.2 4.2V7" stroke-width=".6" opacity=".7"/></g><rect x="45.05" y="575.5" width="13.5" height="8.299999999999999" rx="3" fill="none" stroke="#bdbdbd" stroke-width="1.3"/><g transform="translate(44.4 591.9)"><rect x=".65" y=".65" width="13.2" height="13.2" fill="none" stroke="#bdbdbd" stroke-width="1.3"/><rect x="3.2" y="4.4" width="5.8" height="3" fill="none" stroke="#bdbdbd" stroke-width="1"/><rect x="5.4" y="2.2" width="1.3" height="2" fill="#2f86e6"/><rect x="1.6" y="5.4" width="1.6" height="1.1" fill="#2f86e6"/></g><g transform="translate(44.4 611.15) scale(1.0)" fill="none" stroke="#bdbdbd" stroke-width="1.3"><rect x=".65" y=".65" width="13.2" height="13.2"/><circle cx="7.2" cy="5.6" r="2.9" stroke-width="1.1"/><path d="M7.2 8.4V11M3.2 11.2H11.3" stroke-width="1.2"/><path d="M5.8 5.6H8.6M7.2 4.2V7" stroke-width=".6" opacity=".7"/></g><g transform="translate(44.4 630.4) scale(1.0)" fill="none" stroke="#bdbdbd" stroke-width="1.3"><rect x=".65" y=".65" width="13.2" height="13.2"/><circle cx="7.2" cy="5.6" r="2.9" stroke-width="1.1"/><path d="M7.2 8.4V11M3.2 11.2H11.3" stroke-width="1.2"/><path d="M5.8 5.6H8.6M7.2 4.2V7" stroke-width=".6" opacity=".7"/></g><g transform="translate(0 0)"><path d="M242 547.4H252" stroke="#000" stroke-width="1.2" opacity=".45"/><rect x="241.1" y="539" width="10" height="7.2" fill="#e2e2e2"/><path d="M249.4 539V537.6C249.4 533 255.2 533 255.2 537.6V540" fill="none" stroke="#cfcfcf" stroke-width="1.7"/><path d="M262.6 541C266 534.4 275 534.4 278.6 541C275 547.6 266 547.6 262.6 541Z" fill="none" stroke="#d6d6d6" stroke-width="1.5"/><circle cx="270.3" cy="540.4" r="3" fill="#ececec"/><path d="M268.8 539.6C269 538.6 270 538 270.8 538.2" stroke="#9a9a9a" stroke-width=".7" fill="none"/></g><g transform="translate(0 19)"><path d="M242 547.4H252" stroke="#000" stroke-width="1.2" opacity=".45"/><rect x="241.1" y="539" width="10" height="7.2" fill="#e2e2e2"/><path d="M249.4 539V537.6C249.4 533 255.2 533 255.2 537.6V540" fill="none" stroke="#cfcfcf" stroke-width="1.7"/><path d="M262.6 541C266 534.4 275 534.4 278.6 541C275 547.6 266 547.6 262.6 541Z" fill="none" stroke="#d6d6d6" stroke-width="1.5"/><circle cx="270.3" cy="540.4" r="3" fill="#ececec"/><path d="M268.8 539.6C269 538.6 270 538 270.8 538.2" stroke="#9a9a9a" stroke-width=".7" fill="none"/></g><g transform="translate(0 38.25)"><path d="M242 547.4H252" stroke="#000" stroke-width="1.2" opacity=".45"/><rect x="241.1" y="539" width="10" height="7.2" fill="#e2e2e2"/><path d="M249.4 539V537.6C249.4 533 255.2 533 255.2 537.6V540" fill="none" stroke="#cfcfcf" stroke-width="1.7"/><path d="M262.6 541C266 534.4 275 534.4 278.6 541C275 547.6 266 547.6 262.6 541Z" fill="none" stroke="#d6d6d6" stroke-width="1.5"/><circle cx="270.3" cy="540.4" r="3" fill="#ececec"/><path d="M268.8 539.6C269 538.6 270 538 270.8 538.2" stroke="#9a9a9a" stroke-width=".7" fill="none"/></g><g transform="translate(0 57.5)"><path d="M242 547.4H252" stroke="#000" stroke-width="1.2" opacity=".45"/><rect x="241.1" y="539" width="10" height="7.2" fill="#e2e2e2"/><path d="M249.4 539V537.6C249.4 533 255.2 533 255.2 537.6V540" fill="none" stroke="#cfcfcf" stroke-width="1.7"/><path d="M262.6 541C266 534.4 275 534.4 278.6 541C275 547.6 266 547.6 262.6 541Z" fill="none" stroke="#d6d6d6" stroke-width="1.5"/><circle cx="270.3" cy="540.4" r="3" fill="#ececec"/><path d="M268.8 539.6C269 538.6 270 538 270.8 538.2" stroke="#9a9a9a" stroke-width=".7" fill="none"/></g><g transform="translate(0 76.75)"><path d="M242 547.4H252" stroke="#000" stroke-width="1.2" opacity=".45"/><rect x="241.1" y="539" width="10" height="7.2" fill="#e2e2e2"/><path d="M249.4 539V537.6C249.4 533 255.2 533 255.2 537.6V540" fill="none" stroke="#cfcfcf" stroke-width="1.7"/><path d="M262.6 541C266 534.4 275 534.4 278.6 541C275 547.6 266 547.6 262.6 541Z" fill="none" stroke="#d6d6d6" stroke-width="1.5"/><circle cx="270.3" cy="540.4" r="3" fill="#ececec"/><path d="M268.8 539.6C269 538.6 270 538 270.8 538.2" stroke="#9a9a9a" stroke-width=".7" fill="none"/></g><g transform="translate(0 96)"><path d="M242 547.4H252" stroke="#000" stroke-width="1.2" opacity=".45"/><rect x="241.1" y="539" width="10" height="7.2" fill="#e2e2e2"/><path d="M249.4 539V537.6C249.4 533 255.2 533 255.2 537.6V540" fill="none" stroke="#cfcfcf" stroke-width="1.7"/><path d="M262.6 541C266 534.4 275 534.4 278.6 541C275 547.6 266 547.6 262.6 541Z" fill="none" stroke="#d6d6d6" stroke-width="1.5"/><circle cx="270.3" cy="540.4" r="3" fill="#ececec"/><path d="M268.8 539.6C269 538.6 270 538 270.8 538.2" stroke="#9a9a9a" stroke-width=".7" fill="none"/></g></svg>
<div class="b" style="left:292.8px;top:136.8px;width:1143.8px;height:621.9px;background:#303030;border:2.4px solid #646464;border-radius:3.5px"></div>
<div class="b" style="left:317px;top:161px;width:1117.2px;height:595.2px;background:#262626;overflow:hidden"><div class="b" style="left:0;top:0;width:100%;height:100%;background:repeating-linear-gradient(90deg,#363636 0,#363636 1px,transparent 1px,transparent 19.2px);background-position:4.60px 0;background-size:19.2px 100%"></div><div class="b" style="left:0;top:0;width:100%;height:100%;background:repeating-linear-gradient(180deg,#363636 0,#363636 1px,transparent 1px,transparent 19.2px);background-position:0 9.40px;background-size:100% 19.2px"></div><div class="b" style="left:138.9px;top:0;width:1.2px;height:100%;background:#0c0c0c"></div><div class="b" style="left:330.9px;top:0;width:1.2px;height:100%;background:#0c0c0c"></div><div class="b" style="left:522.9px;top:0;width:1.2px;height:100%;background:#0c0c0c"></div><div class="b" style="left:714.9px;top:0;width:1.2px;height:100%;background:#0c0c0c"></div><div class="b" style="left:906.9px;top:0;width:1.2px;height:100%;background:#0c0c0c"></div><div class="b" style="left:1098.9px;top:0;width:1.2px;height:100%;background:#0c0c0c"></div><div class="b" style="left:0;top:105.3px;width:100%;height:1.2px;background:#0c0c0c"></div><div class="b" style="left:0;top:297.3px;width:100%;height:1.2px;background:#0c0c0c"></div><div class="b" style="left:0;top:489.3px;width:100%;height:1.2px;background:#0c0c0c"></div></div>
<div class="b" style="left:316px;top:160px;width:1118.2px;height:1px;background:#5a5a5a;"></div>
<div class="b" style="left:316px;top:160px;width:1px;height:596.2px;background:#5a5a5a;"></div>
<svg style="left:0;top:0" width="1920" height="1080" viewBox="0 0 1920 1080"><g stroke="#808080" stroke-width="1" shape-rendering="crispEdges"><path d="M319.5 153V160"/><path d="M325.5 157V160"/><path d="M331.5 157V160"/><path d="M337.5 157V160"/><path d="M343.5 157V160"/><path d="M349.5 153V160"/><path d="M355.5 157V160"/><path d="M361.5 157V160"/><path d="M367.5 157V160"/><path d="M373.5 157V160"/><path d="M379.5 153V160"/><path d="M385.5 157V160"/><path d="M391.5 157V160"/><path d="M397.5 157V160"/><path d="M403.5 157V160"/><path d="M409.5 153V160"/><path d="M415.5 157V160"/><path d="M421.5 157V160"/><path d="M427.5 157V160"/><path d="M433.5 157V160"/><path d="M439.5 153V160"/><path d="M445.5 157V160"/><path d="M451.5 157V160"/><path d="M457.5 157V160"/><path d="M463.5 157V160"/><path d="M469.5 153V160"/><path d="M475.5 157V160"/><path d="M481.5 157V160"/><path d="M487.5 157V160"/><path d="M493.5 157V160"/><path d="M499.5 153V160"/><path d="M505.5 157V160"/><path d="M511.5 157V160"/><path d="M517.5 157V160"/><path d="M523.5 157V160"/><path d="M529.5 153V160"/><path d="M535.5 157V160"/><path d="M541.5 157V160"/><path d="M547.5 157V160"/><path d="M553.5 157V160"/><path d="M559.5 153V160"/><path d="M565.5 157V160"/><path d="M571.5 157V160"/><path d="M577.5 157V160"/><path d="M583.5 157V160"/><path d="M589.5 153V160"/><path d="M595.5 157V160"/><path d="M601.5 157V160"/><path d="M607.5 157V160"/><path d="M613.5 157V160"/><path d="M619.5 153V160"/><path d="M625.5 157V160"/><path d="M631.5 157V160"/><path d="M637.5 157V160"/><path d="M643.5 157V160"/><path d="M649.5 153V160"/><path d="M655.5 157V160"/><path d="M661.5 157V160"/><path d="M667.5 157V160"/><path d="M673.5 157V160"/><path d="M679.5 153V160"/><path d="M685.5 157V160"/><path d="M691.5 157V160"/><path d="M697.5 157V160"/><path d="M703.5 157V160"/><path d="M709.5 153V160"/><path d="M715.5 157V160"/><path d="M721.5 157V160"/><path d="M727.5 157V160"/><path d="M733.5 157V160"/><path d="M739.5 153V160"/><path d="M745.5 157V160"/><path d="M751.5 157V160"/><path d="M757.5 157V160"/><path d="M763.5 157V160"/><path d="M769.5 153V160"/><path d="M775.5 157V160"/><path d="M781.5 157V160"/><path d="M787.5 157V160"/><path d="M793.5 157V160"/><path d="M799.5 153V160"/><path d="M805.5 157V160"/><path d="M811.5 157V160"/><path d="M817.5 157V160"/><path d="M823.5 157V160"/><path d="M829.5 153V160"/><path d="M835.5 157V160"/><path d="M841.5 157V160"/><path d="M847.5 157V160"/><path d="M853.5 157V160"/><path d="M859.5 153V160"/><path d="M865.5 157V160"/><path d="M871.5 157V160"/><path d="M877.5 157V160"/><path d="M883.5 157V160"/><path d="M889.5 153V160"/><path d="M895.5 157V160"/><path d="M901.5 157V160"/><path d="M907.5 157V160"/><path d="M913.5 157V160"/><path d="M919.5 153V160"/><path d="M925.5 157V160"/><path d="M931.5 157V160"/><path d="M937.5 157V160"/><path d="M943.5 157V160"/><path d="M949.5 153V160"/><path d="M955.5 157V160"/><path d="M961.5 157V160"/><path d="M967.5 157V160"/><path d="M973.5 157V160"/><path d="M979.5 153V160"/><path d="M985.5 157V160"/><path d="M991.5 157V160"/><path d="M997.5 157V160"/><path d="M1003.5 157V160"/><path d="M1009.5 153V160"/><path d="M1015.5 157V160"/><path d="M1021.5 157V160"/><path d="M1027.5 157V160"/><path d="M1033.5 157V160"/><path d="M1039.5 153V160"/><path d="M1045.5 157V160"/><path d="M1051.5 157V160"/><path d="M1057.5 157V160"/><path d="M1063.5 157V160"/><path d="M1069.5 153V160"/><path d="M1075.5 157V160"/><path d="M1081.5 157V160"/><path d="M1087.5 157V160"/><path d="M1093.5 157V160"/><path d="M1099.5 153V160"/><path d="M1105.5 157V160"/><path d="M1111.5 157V160"/><path d="M1117.5 157V160"/><path d="M1123.5 157V160"/><path d="M1129.5 153V160"/><path d="M1135.5 157V160"/><path d="M1141.5 157V160"/><path d="M1147.5 157V160"/><path d="M1153.5 157V160"/><path d="M1159.5 153V160"/><path d="M1165.5 157V160"/><path d="M1171.5 157V160"/><path d="M1177.5 157V160"/><path d="M1183.5 157V160"/><path d="M1189.5 153V160"/><path d="M1195.5 157V160"/><path d="M1201.5 157V160"/><path d="M1207.5 157V160"/><path d="M1213.5 157V160"/><path d="M1219.5 153V160"/><path d="M1225.5 157V160"/><path d="M1231.5 157V160"/><path d="M1237.5 157V160"/><path d="M1243.5 157V160"/><path d="M1249.5 153V160"/><path d="M1255.5 157V160"/><path d="M1261.5 157V160"/><path d="M1267.5 157V160"/><path d="M1273.5 157V160"/><path d="M1279.5 153V160"/><path d="M1285.5 157V160"/><path d="M1291.5 157V160"/><path d="M1297.5 157V160"/><path d="M1303.5 157V160"/><path d="M1309.5 153V160"/><path d="M1315.5 157V160"/><path d="M1321.5 157V160"/><path d="M1327.5 157V160"/><path d="M1333.5 157V160"/><path d="M1339.5 153V160"/><path d="M1345.5 157V160"/><path d="M1351.5 157V160"/><path d="M1357.5 157V160"/><path d="M1363.5 157V160"/><path d="M1369.5 153V160"/><path d="M1375.5 157V160"/><path d="M1381.5 157V160"/><path d="M1387.5 157V160"/><path d="M1393.5 157V160"/><path d="M1399.5 153V160"/><path d="M1405.5 157V160"/><path d="M1411.5 157V160"/><path d="M1417.5 157V160"/><path d="M1423.5 157V160"/><path d="M1429.5 153V160"/><path d="M313 165.5H316"/><path d="M313 171.5H316"/><path d="M309 177.5H316"/><path d="M313 183.5H316"/><path d="M313 189.5H316"/><path d="M313 195.5H316"/><path d="M313 201.5H316"/><path d="M309 207.5H316"/><path d="M313 213.5H316"/><path d="M313 219.5H316"/><path d="M313 225.5H316"/><path d="M313 231.5H316"/><path d="M309 237.5H316"/><path d="M313 243.5H316"/><path d="M313 249.5H316"/><path d="M313 255.5H316"/><path d="M313 261.5H316"/><path d="M309 267.5H316"/><path d="M313 273.5H316"/><path d="M313 279.5H316"/><path d="M313 285.5H316"/><path d="M313 291.5H316"/><path d="M309 297.5H316"/><path d="M313 303.5H316"/><path d="M313 309.5H316"/><path d="M313 315.5H316"/><path d="M313 321.5H316"/><path d="M309 327.5H316"/><path d="M313 333.5H316"/><path d="M313 339.5H316"/><path d="M313 345.5H316"/><path d="M313 351.5H316"/><path d="M309 357.5H316"/><path d="M313 363.5H316"/><path d="M313 369.5H316"/><path d="M313 375.5H316"/><path d="M313 381.5H316"/><path d="M309 387.5H316"/><path d="M313 393.5H316"/><path d="M313 399.5H316"/><path d="M313 405.5H316"/><path d="M313 411.5H316"/><path d="M309 417.5H316"/><path d="M313 423.5H316"/><path d="M313 429.5H316"/><path d="M313 435.5H316"/><path d="M313 441.5H316"/><path d="M309 447.5H316"/><path d="M313 453.5H316"/><path d="M313 459.5H316"/><path d="M313 465.5H316"/><path d="M313 471.5H316"/><path d="M309 477.5H316"/><path d="M313 483.5H316"/><path d="M313 489.5H316"/><path d="M313 495.5H316"/><path d="M313 501.5H316"/><path d="M309 507.5H316"/><path d="M313 513.5H316"/><path d="M313 519.5H316"/><path d="M313 525.5H316"/><path d="M313 531.5H316"/><path d="M309 537.5H316"/><path d="M313 543.5H316"/><path d="M313 549.5H316"/><path d="M313 555.5H316"/><path d="M313 561.5H316"/><path d="M309 567.5H316"/><path d="M313 573.5H316"/><path d="M313 579.5H316"/><path d="M313 585.5H316"/><path d="M313 591.5H316"/><path d="M309 597.5H316"/><path d="M313 603.5H316"/><path d="M313 609.5H316"/><path d="M313 615.5H316"/><path d="M313 621.5H316"/><path d="M309 627.5H316"/><path d="M313 633.5H316"/><path d="M313 639.5H316"/><path d="M313 645.5H316"/><path d="M313 651.5H316"/><path d="M309 657.5H316"/><path d="M313 663.5H316"/><path d="M313 669.5H316"/><path d="M313 675.5H316"/><path d="M313 681.5H316"/><path d="M309 687.5H316"/><path d="M313 693.5H316"/><path d="M313 699.5H316"/><path d="M313 705.5H316"/><path d="M313 711.5H316"/><path d="M309 717.5H316"/><path d="M313 723.5H316"/><path d="M313 729.5H316"/><path d="M313 735.5H316"/><path d="M313 741.5H316"/><path d="M309 747.5H316"/><path d="M313 753.5H316"/></g><path d="M457 139V160" stroke="#151515" stroke-width="1.2"/><path d="M649 139V160" stroke="#151515" stroke-width="1.2"/><path d="M841 139V160" stroke="#151515" stroke-width="1.2"/><path d="M1033 139V160" stroke="#151515" stroke-width="1.2"/><path d="M1225 139V160" stroke="#151515" stroke-width="1.2"/><path d="M1417 139V160" stroke="#151515" stroke-width="1.2"/><path d="M295 267H316" stroke="#151515" stroke-width="1.2"/><path d="M295 459H316" stroke="#151515" stroke-width="1.2"/><path d="M295 651H316" stroke="#151515" stroke-width="1.2"/><path d="M897.5 139V160" stroke="#22cc22" stroke-width="1.6"/><path d="M295 586H316" stroke="#22cc22" stroke-width="1.6"/></svg>
<span class="t" style="left:341.00px;top:142.99px;font-size:12.42px;line-height:12.42px;color:#a6a6a6;transform:scaleX(0.8722);">250</span>
<span class="t" style="left:401.00px;top:142.99px;font-size:12.42px;line-height:12.42px;color:#a6a6a6;transform:scaleX(0.8722);">200</span>
<span class="t" style="left:461.00px;top:142.99px;font-size:12.42px;line-height:12.42px;color:#a6a6a6;transform:scaleX(0.8722);">150</span>
<span class="t" style="left:521.00px;top:142.99px;font-size:12.42px;line-height:12.42px;color:#a6a6a6;transform:scaleX(0.8722);">100</span>
<span class="t" style="left:583.70px;top:142.99px;font-size:12.42px;line-height:12.42px;color:#a6a6a6;transform:scaleX(0.9180);">50</span>
<span class="t" style="left:646.50px;top:142.99px;font-size:12.42px;line-height:12.42px;color:#a6a6a6;transform:scaleX(1.0265);">0</span>
<span class="t" style="left:703.70px;top:142.99px;font-size:12.42px;line-height:12.42px;color:#a6a6a6;transform:scaleX(0.9180);">50</span>
<span class="t" style="left:761.00px;top:142.99px;font-size:12.42px;line-height:12.42px;color:#a6a6a6;transform:scaleX(0.8722);">100</span>
<span class="t" style="left:821.00px;top:142.99px;font-size:12.42px;line-height:12.42px;color:#a6a6a6;transform:scaleX(0.8722);">150</span>
<span class="t" style="left:881.00px;top:142.99px;font-size:12.42px;line-height:12.42px;color:#a6a6a6;transform:scaleX(0.8722);">200</span>
<span class="t" style="left:941.00px;top:142.99px;font-size:12.42px;line-height:12.42px;color:#a6a6a6;transform:scaleX(0.8722);">250</span>
<span class="t" style="left:1001.00px;top:142.99px;font-size:12.42px;line-height:12.42px;color:#a6a6a6;transform:scaleX(0.8722);">300</span>
<span class="t" style="left:1061.00px;top:142.99px;font-size:12.42px;line-height:12.42px;color:#a6a6a6;transform:scaleX(0.8722);">350</span>
<span class="t" style="left:1121.00px;top:142.99px;font-size:12.42px;line-height:12.42px;color:#a6a6a6;transform:scaleX(0.8722);">400</span>
<span class="t" style="left:1181.00px;top:142.99px;font-size:12.42px;line-height:12.42px;color:#a6a6a6;transform:scaleX(0.8722);">450</span>
<span class="t" style="left:1241.00px;top:142.99px;font-size:12.42px;line-height:12.42px;color:#a6a6a6;transform:scaleX(0.8722);">500</span>
<span class="t" style="left:1301.00px;top:142.99px;font-size:12.42px;line-height:12.42px;color:#a6a6a6;transform:scaleX(0.8722);">550</span>
<span class="t" style="left:1361.00px;top:142.99px;font-size:12.42px;line-height:12.42px;color:#a6a6a6;transform:scaleX(0.8722);">600</span>
<div class="b" style="left:1420.9px;top:141px;width:13.099999999999909px;height:16px;overflow:hidden"><span class="t" style="left:0.10px;top:1.99px;font-size:12.42px;line-height:12.42px;color:#a6a6a6;transform:scaleX(0.8722);">650</span></div>
<span class="t" style="left:299.70px;top:196.14px;font-size:12.11px;line-height:12.11px;color:#a6a6a6;transform:scaleX(1.0529);">5</span>
<span class="t" style="left:299.70px;top:209.34px;font-size:12.11px;line-height:12.11px;color:#a6a6a6;transform:scaleX(1.0529);">0</span>
<span class="t" style="left:299.70px;top:262.75px;font-size:12.11px;line-height:12.11px;color:#a6a6a6;transform:scaleX(1.0529);">0</span>
<span class="t" style="left:299.70px;top:316.14px;font-size:12.11px;line-height:12.11px;color:#a6a6a6;transform:scaleX(1.0529);">5</span>
<span class="t" style="left:299.70px;top:329.35px;font-size:12.11px;line-height:12.11px;color:#a6a6a6;transform:scaleX(1.0529);">0</span>
<span class="t" style="left:299.70px;top:369.55px;font-size:12.11px;line-height:12.11px;color:#a6a6a6;transform:scaleX(1.0529);">1</span>
<span class="t" style="left:299.70px;top:382.75px;font-size:12.11px;line-height:12.11px;color:#a6a6a6;transform:scaleX(1.0529);">0</span>
<span class="t" style="left:299.70px;top:395.94px;font-size:12.11px;line-height:12.11px;color:#a6a6a6;transform:scaleX(1.0529);">0</span>
<span class="t" style="left:299.70px;top:429.55px;font-size:12.11px;line-height:12.11px;color:#a6a6a6;transform:scaleX(1.0529);">1</span>
<span class="t" style="left:299.70px;top:442.75px;font-size:12.11px;line-height:12.11px;color:#a6a6a6;transform:scaleX(1.0529);">5</span>
<span class="t" style="left:299.70px;top:455.94px;font-size:12.11px;line-height:12.11px;color:#a6a6a6;transform:scaleX(1.0529);">0</span>
<span class="t" style="left:299.70px;top:489.55px;font-size:12.11px;line-height:12.11px;color:#a6a6a6;transform:scaleX(1.0529);">2</span>
<span class="t" style="left:299.70px;top:502.75px;font-size:12.11px;line-height:12.11px;color:#a6a6a6;transform:scaleX(1.0529);">0</span>
<span class="t" style="left:299.70px;top:515.95px;font-size:12.11px;line-height:12.11px;color:#a6a6a6;transform:scaleX(1.0529);">0</span>
<span class="t" style="left:299.70px;top:549.55px;font-size:12.11px;line-height:12.11px;color:#a6a6a6;transform:scaleX(1.0529);">2</span>
<span class="t" style="left:299.70px;top:562.75px;font-size:12.11px;line-height:12.11px;color:#a6a6a6;transform:scaleX(1.0529);">5</span>
<span class="t" style="left:299.70px;top:575.95px;font-size:12.11px;line-height:12.11px;color:#a6a6a6;transform:scaleX(1.0529);">0</span>
<span class="t" style="left:299.70px;top:609.55px;font-size:12.11px;line-height:12.11px;color:#a6a6a6;transform:scaleX(1.0529);">3</span>
<span class="t" style="left:299.70px;top:622.75px;font-size:12.11px;line-height:12.11px;color:#a6a6a6;transform:scaleX(1.0529);">0</span>
<span class="t" style="left:299.70px;top:635.95px;font-size:12.11px;line-height:12.11px;color:#a6a6a6;transform:scaleX(1.0529);">0</span>
<span class="t" style="left:299.70px;top:669.55px;font-size:12.11px;line-height:12.11px;color:#a6a6a6;transform:scaleX(1.0529);">3</span>
<span class="t" style="left:299.70px;top:682.75px;font-size:12.11px;line-height:12.11px;color:#a6a6a6;transform:scaleX(1.0529);">5</span>
<span class="t" style="left:299.70px;top:695.95px;font-size:12.11px;line-height:12.11px;color:#a6a6a6;transform:scaleX(1.0529);">0</span>
<span class="t" style="left:299.70px;top:729.55px;font-size:12.11px;line-height:12.11px;color:#a6a6a6;transform:scaleX(1.0529);">4</span>
<span class="t" style="left:299.70px;top:742.75px;font-size:12.11px;line-height:12.11px;color:#a6a6a6;transform:scaleX(1.0529);">0</span>
<svg style="left:293px;top:137px" width="13" height="13"><path d="M0 0H12L0 12Z" fill="#c9a227"/></svg>
<span class="t" style="left:324.4px;top:168.26px;font-size:24.5px;line-height:24.5px;color:#5a5a5a;font-weight:bold;transform:scaleX(0.8522);transform-origin:0 0">Zoom 1:1</span>
<span class="t" style="left:1257.8px;top:727.46px;font-size:24.5px;line-height:24.5px;color:#5a5a5a;font-weight:bold;transform:scaleX(0.8850);transform-origin:0 0">DPI Scale 1.0</span>
<div class="b" style="left:646.0px;top:264.0px;width:427.0px;height:427.0px;background:transparent;border:2.5px solid #00c6ff;border-radius:3px"></div>
<svg style="left:648.5px;top:266.5px" width="422.0" height="422.0" viewBox="0 0 422.0 422.0"><defs><pattern id="smD" width="25.260" height="25.260" patternUnits="userSpaceOnUse" x="210.60" y="212.60"><rect width="25.260" height="25.260" fill="#5f5f60"/><rect width="12.630" height="12.630" fill="#656566"/><rect x="12.630" y="12.630" width="12.630" height="12.630" fill="#656566"/></pattern><pattern id="smL" width="25.260" height="25.260" patternUnits="userSpaceOnUse" x="210.60" y="212.60"><rect width="25.260" height="25.260" fill="#6c6d6c"/><rect width="12.630" height="12.630" fill="#777778"/><rect x="12.630" y="12.630" width="12.630" height="12.630" fill="#777778"/></pattern><radialGradient id="fog" cx=".5" cy=".5" r=".71"><stop offset="0" stop-color="#fff" stop-opacity="0"/><stop offset=".5" stop-color="#fff" stop-opacity="0"/><stop offset=".8" stop-color="#fff" stop-opacity=".07"/><stop offset="1" stop-color="#fff" stop-opacity=".16"/></radialGradient><linearGradient id="eL" x1="0" x2="1" y1="0" y2="0"><stop offset="0" stop-color="#000" stop-opacity=".6"/><stop offset=".35" stop-color="#000" stop-opacity=".32"/><stop offset="1" stop-color="#000" stop-opacity="0"/></linearGradient><linearGradient id="eR" x1="1" x2="0" y1="0" y2="0"><stop offset="0" stop-color="#000" stop-opacity=".6"/><stop offset=".35" stop-color="#000" stop-opacity=".32"/><stop offset="1" stop-color="#000" stop-opacity="0"/></linearGradient><linearGradient id="eT" x1="0" x2="0" y1="0" y2="1"><stop offset="0" stop-color="#000" stop-opacity=".6"/><stop offset=".35" stop-color="#000" stop-opacity=".32"/><stop offset="1" stop-color="#000" stop-opacity="0"/></linearGradient><linearGradient id="eB" x1="0" x2="0" y1="1" y2="0"><stop offset="0" stop-color="#000" stop-opacity=".6"/><stop offset=".35" stop-color="#000" stop-opacity=".32"/><stop offset="1" stop-color="#000" stop-opacity="0"/></linearGradient><filter id="nz" x="0" y="0" width="100%" height="100%"><feTurbulence type="fractalNoise" baseFrequency="0.045" numOctaves="3" seed="11"/><feColorMatrix type="matrix" values="0 0 0 0 1  0 0 0 0 1  0 0 0 0 1  1.1 0 0 0 -.42"/></filter></defs><rect width="422.0" height="422.0" fill="url(#smD)"/><rect x="0.0" y="86.3" width="84.3" height="126.3" fill="url(#smL)"/><rect x="0.0" y="338.9" width="84.3" height="83.1" fill="url(#smL)"/><rect x="84.3" y="0.0" width="126.3" height="86.3" fill="url(#smL)"/><rect x="84.3" y="212.6" width="126.3" height="126.3" fill="url(#smL)"/><rect x="210.6" y="86.3" width="126.3" height="126.3" fill="url(#smL)"/><rect x="210.6" y="338.9" width="126.3" height="83.1" fill="url(#smL)"/><rect x="336.9" y="0.0" width="85.1" height="86.3" fill="url(#smL)"/><rect x="336.9" y="212.6" width="85.1" height="126.3" fill="url(#smL)"/><rect width="422.0" height="422.0" filter="url(#nz)" opacity=".07"/><rect width="422.0" height="422.0" fill="url(#fog)"/><rect width="26" height="422.0" fill="url(#eL)"/><rect x="396.0" width="26" height="422.0" fill="url(#eR)"/><rect width="422.0" height="26" fill="url(#eT)"/><rect y="396.0" width="422.0" height="26" fill="url(#eB)"/><rect x="3.6" y="3.6" width="414.8" height="414.8" fill="none" stroke="#b6b6b6" stroke-width="2.6"/><rect x="5.4" y="5.4" width="411.2" height="411.2" fill="none" stroke="#8c8c8c" stroke-width="1" opacity=".65"/><rect x="1.1" y="1.1" width="419.8" height="419.8" fill="none" stroke="#0a0a0a" stroke-width="2.2"/><rect x="1.3" y="1.3" width="419.4" height="419.4" fill="none" stroke="#f4f4f4" stroke-width="1.7" stroke-dasharray="4.8 4.8" stroke-dashoffset="-1"/><circle cx="222.0" cy="186.3" r="2.6" fill="#fff" opacity=".13"/><circle cx="229.29999999999995" cy="191.3" r="1.4" fill="#fff" opacity=".1"/><path d="M210.60000000000002 200.7L221.20000000000002 221.5L210.60000000000002 218.5L200.00000000000003 221.5Z" fill="#000" opacity=".3" transform="translate(.8 1.2)"/><path d="M210.60000000000002 200.7L221.20000000000002 221.5L210.60000000000002 218.5L200.00000000000003 221.5Z" fill="#fff"/></svg>
<div class="b" style="left:908.5px;top:163.5px;width:27.5px;height:28.0px;background:#b9b9b9;border-radius:7px 0 0 7px;box-shadow:0 0 0 1px #161616"></div>
<div class="b" style="left:937.2px;top:163.5px;width:53.799999999999955px;height:28.0px;background:#b9b9b9;border-radius:0 7px 7px 0;box-shadow:0 0 0 1px #161616"></div>
<div class="b" style="left:997.4px;top:163.5px;width:26.300000000000068px;height:28.0px;background:#d17e0c;border-radius:7px;box-shadow:0 0 0 1px #161616"></div>
<div class="b" style="left:1025.9px;top:163.5px;width:26.5px;height:28.0px;background:#d17e0c;border-radius:7px;box-shadow:0 0 0 1px #161616"></div>
<div class="b" style="left:1058.2px;top:163.5px;width:27.799999999999955px;height:28.0px;background:#d17e0c;border-radius:7px 0 0 7px;box-shadow:0 0 0 1px #161616"></div>
<div class="b" style="left:1086px;top:163.5px;width:27.200000000000045px;height:28.0px;background:#b9b9b9;border-radius:0 7px 7px 0;box-shadow:0 0 0 1px #161616"></div>
<div class="b" style="left:1119.5px;top:163.5px;width:27.700000000000045px;height:28.0px;background:#d17e0c;border-radius:7px 0 0 7px;box-shadow:0 0 0 1px #161616"></div>
<div class="b" style="left:1147.2px;top:163.5px;width:29.299999999999955px;height:28.0px;background:#b9b9b9;border-radius:0 7px 7px 0;box-shadow:0 0 0 1px #161616"></div>
<div class="b" style="left:1180px;top:163.5px;width:25.700000000000045px;height:28.0px;background:#b9b9b9;border-radius:7px;box-shadow:0 0 0 1px #161616"></div>
<div class="b" style="left:1208.6px;top:163.5px;width:26.0px;height:28.0px;background:#787878;border-radius:7px;box-shadow:0 0 0 1px #161616"></div>
<div class="b" style="left:1237.5px;top:163.5px;width:25.799999999999955px;height:28.0px;background:#787878;border-radius:7px;box-shadow:0 0 0 1px #161616"></div>
<div class="b" style="left:1266.3px;top:165px;width:94.5px;height:25px;background:#b9b9b9;border-radius:8px;box-shadow:0 0 0 1px #161616"></div>
<div class="b" style="left:1363.2px;top:165px;width:69.79999999999995px;height:25px;background:#b9b9b9;border-radius:8px;box-shadow:0 0 0 1px #161616"></div>
<span class="t" style="left:947.60px;top:167.95px;font-size:14.49px;line-height:14.49px;color:#141414;transform:scaleX(0.9655);font-weight:bold;">None</span>
<svg style="left:962.5px;top:185.0px" width="5" height="3"><path d="M0 0H5L2.5 3Z" fill="#141414"/></svg>
<span class="t" style="left:1093.10px;top:169.98px;font-size:16.04px;line-height:16.04px;color:#454545;transform:scaleX(1.0776);font-weight:bold;">R</span>
<span class="t" style="left:1156.60px;top:167.44px;font-size:15.52px;line-height:15.52px;color:#141414;transform:scaleX(1.2181);font-weight:bold;">4</span>
<svg style="left:1159.5px;top:185.0px" width="5" height="3"><path d="M0 0H5L2.5 3Z" fill="#141414"/></svg>
<span class="t" style="left:1269.10px;top:169.89px;font-size:15.01px;line-height:15.01px;color:#141414;transform:scaleX(0.8846);font-weight:bold;">Screen Size</span>
<svg style="left:1345.75px;top:175.5px" width="9.5" height="5"><path d="M0 0H9.5L4.75 5Z" fill="#141414"/></svg>
<span class="t" style="left:1365.60px;top:169.89px;font-size:15.01px;line-height:15.01px;color:#141414;transform:scaleX(0.8904);font-weight:bold;">Desired</span>
<svg style="left:1416.75px;top:175.5px" width="9.5" height="5"><path d="M0 0H9.5L4.75 5Z" fill="#141414"/></svg>
<div class="b" style="left:1447px;top:137.2px;width:180px;height:25.5px;background:#5f5f5f;border-radius:4px 4px 0 0;"></div>
<span class="t" style="left:1480.10px;top:140.92px;font-size:16.56px;line-height:16.56px;color:#e8e8e8;transform:scaleX(0.9086);text-shadow:1px 1px 1px rgba(0,0,0,.9);">Details</span>
<svg style="left:1606px;top:145.5px" width="10" height="10"><path d="M1.5 1.5L8.5 8.5M8.5 1.5L1.5 8.5" stroke="#444" stroke-width="1.3" fill="none"/></svg>
<div class="b" style="left:1442px;top:161.8px;width:480px;height:596.8px;background:#606060;border-radius:0 0 0 4px;border-left:1px solid #5a5a5a"></div>
<div class="b" style="left:1448px;top:164.5px;width:240px;height:21.5px;background:#e0e0e0;border-radius:3px;box-shadow:inset 0 1px 2px rgba(0,0,0,.25)"></div>
<span class="t" style="left:1454.10px;top:166.74px;font-size:15.32px;line-height:15.32px;color:#9a9a9a;transform:scaleX(0.9426);">Name</span>
<div class="b" style="left:1697px;top:167px;width:16.5px;height:17px;background:#b9b9b9;border-radius:2px;box-shadow:inset 0 0 0 1px rgba(0,0,0,.12)"></div>
<span class="t" style="left:1717.85px;top:166.74px;font-size:15.32px;line-height:15.32px;color:#dedede;transform:scaleX(0.9760);">Is Variable</span>
<div class="b" style="left:298.75px;top:764.5px;width:180px;height:26px;background:#4a4a4a;border-radius:4px 4px 0 0;box-shadow:inset 0 1px 0 #555;"></div>
<span class="t" style="left:331.60px;top:768.92px;font-size:16.56px;line-height:16.56px;color:#e0e0e0;transform:scaleX(0.8996);text-shadow:1px 1px 1px rgba(0,0,0,.9);">Timeline</span>
<svg style="left:458px;top:772.5px" width="10" height="10"><path d="M1.5 1.5L8.5 8.5M8.5 1.5L1.5 8.5" stroke="#333" stroke-width="1.3" fill="none"/></svg>
<div class="b" style="left:480px;top:764.5px;width:180px;height:26px;background:#5f5f5f;border-radius:4px 4px 0 0;"></div>
<span class="t" style="left:512.85px;top:768.92px;font-size:16.56px;line-height:16.56px;color:#e8e8e8;transform:scaleX(0.8803);text-shadow:1px 1px 1px rgba(0,0,0,.9);">Compiler Results</span>
<svg style="left:639.5px;top:772.5px" width="10" height="10"><path d="M1.5 1.5L8.5 8.5M8.5 1.5L1.5 8.5" stroke="#444" stroke-width="1.3" fill="none"/></svg>
<div class="b" style="left:293.9px;top:789.7px;width:1625px;height:241.4px;background:#3e3e3e;border:2.5px solid #5e5e5e;border-radius:4.5px;"></div>
<div class="b" style="left:301px;top:797px;width:1610.2px;height:189px;background:#222;border-radius:1px;box-shadow:0 0 1.5px 0.5px #2a2a2a"></div>
<span class="t" style="left:1870.10px;top:999.22px;font-size:16.56px;line-height:16.56px;color:#767676;transform:scaleX(0.8843);">Clear</span>
<svg style="left:0;top:0" width="1920" height="1032" viewBox="0 0 1920 1032"><defs><linearGradient id="gHi" x1="0" y1="0" x2="0" y2="1"><stop offset="0" stop-color="#ffffff"/><stop offset="1" stop-color="#cfeff6"/></linearGradient><linearGradient id="gTl" x1="0" y1="0" x2="1" y2="0"><stop offset="0" stop-color="#f4f8ff"/><stop offset=".5" stop-color="#bfe6f6"/><stop offset="1" stop-color="#5f80d0"/></linearGradient><linearGradient id="gTl2" x1="0" y1="0" x2="1" y2="0"><stop offset="0" stop-color="#8fb0ee"/><stop offset="1" stop-color="#4f6fc4"/></linearGradient><radialGradient id="gInfo" cx=".5" cy=".4" r=".6"><stop offset="0" stop-color="#b4b4b4"/><stop offset="1" stop-color="#6c6c6c"/></radialGradient><filter id="b06"><feGaussianBlur stdDeviation="0.7"/></filter></defs><g><path d="M13.2 154.2C12.6 148 18.5 141.6 26 141.2C31.4 141 33.4 145 32.4 149.6C31.4 154.4 28 157.6 24.6 157.4C23 157.2 22.8 155.6 22.2 155.4C21 155.4 19.8 157.8 17 157.8C14.6 157.8 13.4 156.4 13.2 154.2Z" fill="#fff" stroke="#1e1e1e" stroke-width=".9"/><ellipse cx="19.2" cy="152" rx="1.9" ry="1.5" transform="rotate(-35 19.2 152)" fill="#0a0a0a"/><circle cx="27.1" cy="152.1" r="2.2" fill="#3f7fe2"/><circle cx="19" cy="146.6" r="1.5" fill="#b4d2f4"/><circle cx="24.8" cy="143.9" r="1.6" fill="#a6c8f2"/><circle cx="29.4" cy="146.4" r="1.6" fill="#a6c8f2"/></g><g fill="url(#gHi)" stroke="#2a2a2a" stroke-width=".5"><rect x="13" y="457.2" width="3.8" height="3.4"/><rect x="18.6" y="457.2" width="13.4" height="3.4"/><rect x="18.9" y="463" width="2.9" height="3.1"/><rect x="23.8" y="463" width="8.2" height="3.1"/><rect x="18.9" y="468.4" width="2.9" height="3.6"/><rect x="23.8" y="468.4" width="8.2" height="3.6"/></g><path d="M14.5 469.6H17" stroke="#333" stroke-width="1"/><g><path d="M25 780.4L31.5 780.8L29 782.6L24 782.2Z" fill="#000" opacity=".6" filter="url(#b06)"/><path d="M22.5 775L25.6 779L20.5 784L13.2 777.4Z" fill="#b8c6c8" opacity=".55"/><path d="M22.4 774.6L28.2 770L32 774.4L26 779.4Z" fill="#d6ecfb" stroke="#7f9be0" stroke-width=".8"/><path d="M22.4 774.6L26 779.4" stroke="#2c3a66" stroke-width="1.1"/></g><g><ellipse cx="1462.6" cy="156.6" rx="6.4" ry="1.7" fill="#000" opacity=".7" filter="url(#b06)"/><path d="M1467.6 153.4L1473.2 158.4" stroke="#4f74dc" stroke-width="2.2" stroke-linecap="round"/><circle cx="1462.4" cy="147.9" r="7.3" fill="url(#gInfo)" stroke="#5b80e2" stroke-width="1.6"/><circle cx="1462.8" cy="143.8" r="1.4" fill="#fff"/><path d="M1460.6 146.6H1463.8V151.2H1465.2V152.4H1460.2V151.2H1461.6V147.8H1460.6Z" fill="#fff"/></g><g><path d="M306 773.6L322.8 771.4L325 774.6L307.6 777.8Z" fill="url(#gTl2)"/><path d="M308.6 773.8L310.2 776.6L311.8 773.4ZM313 772.8L314.4 775.6L316 772.4ZM320.6 771.9L321.6 774.4L323.6 773.6Z" fill="#fff"/><path d="M307 779.2L323.8 775.6L325.6 780L309 785.2Z" fill="url(#gTl)"/><circle cx="321.4" cy="777.6" r="1.2" fill="#fff"/></g><g><path d="M490.5 768.5L502.2 768.3L504.7 771L504.1 786.3L488.3 783Z" fill="#d9e4ff" stroke="#f4f7ff" stroke-width=".5"/><path d="M502.2 768.3L504.7 771L502.6 770.6Z" fill="#6f8fe6"/><path d="M492.4 772.6L497.6 777.6L492.4 782" fill="none" stroke="#1b2340" stroke-width="1.7"/><path d="M497.2 782.3H502.6" stroke="#1b2340" stroke-width="1.7"/></g><g><circle cx="922.3" cy="177.5" r="8.6" fill="#c6c6c6" stroke="#1c1c1c" stroke-width="1.5"/><path d="M916.4 172.2C918 171 920.6 170.8 921.8 171.8C922.6 173 921.2 174 920 174.6C919.2 175.6 920.4 176.6 921.6 177C923 177.6 923.6 178.8 922.8 180.2C922 181.6 921.6 183.2 920.6 184.6C919 183.4 918.6 181.4 918.4 179.6C917 178.6 915.2 177.4 914.6 175.6C915 174.2 915.6 173.2 916.4 172.2Z" fill="#1c1c1c"/><path d="M924.6 170C926.4 170.6 927.8 171.4 928.8 172.8C927.8 173.4 926.8 173 925.8 173.6C925 174.6 926.2 175.4 927.4 175.6C928.6 175.8 929.6 176.6 930.4 177.6C930.4 179.6 929.8 181.4 928.6 182.8C927.4 182.6 927 181.2 927.2 180C926.2 179.2 924.8 178.8 924.6 177.4C924.6 176.2 925.6 175.4 924.8 174.4C923.8 173.6 923 172.8 923.2 171.6C923.4 170.8 923.8 170.2 924.6 170Z" fill="#1c1c1c"/></g><rect x="1002.6" y="170" width="15.6" height="15.6" fill="#c47408" stroke="#8a8a8a" stroke-width="1.5" stroke-dasharray="3.2 1.6"/><rect x="1002.6" y="170" width="15.6" height="15.6" fill="none" stroke="#3a2a10" stroke-width=".5" stroke-dasharray="3.2 1.6" opacity=".7"/><g><rect x="1032.8" y="177" width="12.8" height="8.8" rx="1" fill="#3b2308"/><path d="M1035.6 177V174.4C1035.6 169.6 1042.8 169.6 1042.8 174.4V177" fill="none" stroke="#3b2308" stroke-width="1.9"/></g><g fill="#3c424c"><path d="M1066 169.4L1067.8 171.4V183.6L1066 185.6L1064.2 183.6V171.4Z"/><rect x="1069.6" y="170.4" width="11" height="3.2" rx="1"/><rect x="1069.6" y="175.4" width="11" height="9.4" rx="1.8"/></g><rect x="1124.8" y="169.6" width="17" height="16" fill="#f09a1c"/><g stroke="#1a1206" stroke-width="1.5"><path d="M1125.3 169.4V186.2"/><path d="M1124.6 170.0H1142.4"/><path d="M1129.4 169.4V186.2"/><path d="M1124.6 173.9H1142.4"/><path d="M1133.5 169.4V186.2"/><path d="M1124.6 177.8H1142.4"/><path d="M1137.6 169.4V186.2"/><path d="M1124.6 181.7H1142.4"/><path d="M1141.7 169.4V186.2"/><path d="M1124.6 185.6H1142.4"/></g><g stroke="#4c4c4c" stroke-width="1.2" fill="none"><path d="M1184 170.6V184.4M1201.6 170.6V184.4M1186.6 167.6H1199M1186.6 187.4H1199"/><path d="M1186 177.5H1199.6M1192.8 170.4V184.6"/></g><path d="M1185.4 177.5L1188 175.5V179.5ZM1200.2 177.5L1197.6 175.5V179.5ZM1192.8 169.6L1190.8 172.2H1194.8ZM1192.8 185.4L1190.8 182.8H1194.8Z" fill="#4c4c4c"/><g><rect x="1212.4" y="170.8" width="18.4" height="13.6" fill="none" stroke="#3f3f3f" stroke-width="1.4"/><path d="M1213.4 183.4L1219 176.4L1222.6 180L1225.4 177.6L1230 183.4Z" fill="#3f3f3f"/><circle cx="1216" cy="173.8" r="1.1" fill="#3f3f3f"/></g><g><path d="M1248.4 170.2V185.4H1240.6Z" fill="none" stroke="#454545" stroke-width="1.2"/><path d="M1251.6 169.4V185.8H1260.6Z" fill="#3f3f3f"/></g><path d="M1420.89 742.85 L1423.07 744.11 L1422.15 746.33 L1419.72 745.70 L1417.93 747.50 L1418.58 749.93 L1416.36 750.85 L1415.08 748.68 L1412.55 748.69 L1411.29 750.87 L1409.07 749.95 L1409.70 747.52 L1407.90 745.73 L1405.47 746.38 L1404.55 744.16 L1406.72 742.88 L1406.71 740.35 L1404.53 739.09 L1405.45 736.87 L1407.88 737.50 L1409.67 735.70 L1409.02 733.27 L1411.24 732.35 L1412.52 734.52 L1415.05 734.51 L1416.31 732.33 L1418.53 733.25 L1417.90 735.68 L1419.70 737.47 L1422.13 736.82 L1423.05 739.04 L1420.88 740.32Z M1418.10 741.60 A4.3 4.3 0 1 0 1409.50 741.60 A4.3 4.3 0 1 0 1418.10 741.60Z" fill="#aebcf0" fill-rule="evenodd"/><circle cx="1413.8" cy="741.6" r="5.4" fill="none" stroke="#dfe5fb" stroke-width=".9"/></svg>
<div class="b" style="left:0px;top:1031.5px;width:1920px;height:48.5px;background:#0d0a14;"></div>
<div class="b" style="left:706.8px;top:1031.5px;width:57.8px;height:48.5px;background:#38343d;"></div>
<div class="b" style="left:123.5px;top:1077.7px;width:48.0px;height:2.3px;background:#ea72e4;"></div>
<div class="b" style="left:182.5px;top:1077.7px;width:48.0px;height:2.3px;background:#ea72e4;"></div>
<div class="b" style="left:241.5px;top:1077.7px;width:48.0px;height:2.3px;background:#ea72e4;"></div>
<div class="b" style="left:359.5px;top:1077.7px;width:47.5px;height:2.3px;background:#ea72e4;"></div>
<div class="b" style="left:418px;top:1077.7px;width:47.5px;height:2.3px;background:#ea72e4;"></div>
<div class="b" style="left:476.5px;top:1077.7px;width:48.0px;height:2.3px;background:#ea72e4;"></div>
<div class="b" style="left:535px;top:1077.7px;width:48px;height:2.3px;background:#ea72e4;"></div>
<div class="b" style="left:594px;top:1077.7px;width:48px;height:2.3px;background:#ea72e4;"></div>
<div class="b" style="left:652.5px;top:1077.7px;width:47.5px;height:2.3px;background:#ea72e4;"></div>
<div class="b" style="left:706.8px;top:1077.7px;width:57.80000000000007px;height:2.3px;background:#ea72e4;"></div>
<div class="b" style="left:770.7px;top:1077.7px;width:47.69999999999993px;height:2.3px;background:#ea72e4;"></div>
<span class="t" style="left:1797.60px;top:1038.92px;font-size:13.97px;line-height:13.97px;color:#f2f2f2;transform:scaleX(0.9134);">16:33</span>
<span class="t" style="left:1778.80px;top:1059.22px;font-size:13.97px;line-height:13.97px;color:#f2f2f2;transform:scaleX(1.0104);">04/10/2018</span>
<div class="b" style="left:1914.5px;top:1032px;width:1px;height:48px;background:#474550;"></div>
<svg style="left:0;top:1031px" width="1920" height="49" viewBox="0 1031 1920 49"><defs><linearGradient id="gSt" x1="0" y1="0" x2="0" y2="1"><stop offset="0" stop-color="#0d1f45"/><stop offset=".55" stop-color="#123a70"/><stop offset="1" stop-color="#1b7cb4"/></linearGradient><radialGradient id="gPic" cx=".5" cy=".5" r=".5"><stop offset="0" stop-color="#fff"/><stop offset=".85" stop-color="#f4f4f4"/><stop offset="1" stop-color="#ddd"/></radialGradient><clipPath id="cCh"><circle cx="206.4" cy="1056" r="13.6"/></clipPath></defs><path d="M18.9 1048.8L26.1 1047.8V1054.9H18.9ZM27.7 1047.5L38.9 1045.9V1054.9H27.7ZM18.9 1056.1H26.1V1063.2L18.9 1062.2ZM27.7 1056.1H38.9V1066.2L27.7 1064.5Z" fill="#ffffff"/><g fill="none" stroke="#ffffff" stroke-width="1.3"><rect x="77.4" y="1052.2" width="12" height="6.6"/><path d="M77.4 1046.4V1048.8H89.4V1046.4"/><path d="M77.4 1064.4V1062H89.4V1064.4"/><path d="M94.2 1046.4V1049.6M94.2 1056.8V1064.4"/></g><rect x="92.8" y="1051.6" width="2.8" height="2.9" fill="#ffffff"/><g><path d="M134.7 1046.6C134.7 1045.6 135.3 1045 136.3 1045H144.6L146.4 1047H159C159.8 1047 160.3 1047.5 160.3 1048.3V1066H134.7Z" fill="#fbe6a2"/><path d="M135.5 1046H144.4L145.4 1047H135.5Z" fill="#f1c232"/><rect x="136.6" y="1045.6" width="4.6" height="1.1" fill="#fff6cf"/><path d="M139 1057.6C139 1057 139.4 1056.6 140 1056.6H155.2C155.8 1056.6 156.2 1057 156.2 1057.6V1067H151.6V1061H143.8V1067H139Z" fill="#3db3ee"/><rect x="143.8" y="1061" width="7.8" height="5" fill="#f7dc8a"/></g><g clip-path="url(#cCh)"><circle cx="206.4" cy="1056" r="13.6" fill="#db4437"/><path d="M206.4 1056L194.6 1049.2L192 1056L199 1069L206.4 1070.5L212.5 1059.5Z" fill="#0f9d58"/><path d="M206.4 1056L212.6 1051H220.5L221 1060L213 1069L205.4 1069.8L212.2 1058.6Z" fill="#ffcd40"/><path d="M194.4 1049.4L200.6 1059.2L206.4 1056L200.6 1050Z" fill="#0f9d58"/></g><path d="M206.4 1049.7H219.4" stroke="#db4437" stroke-width="0"/><circle cx="206.4" cy="1056" r="6.3" fill="#f1f1f1"/><circle cx="206.4" cy="1056" r="5" fill="#4285f4"/><g><circle cx="265" cy="1056" r="13.3" fill="url(#gSt)"/><circle cx="269.4" cy="1052.4" r="4.3" fill="none" stroke="#e8eef4" stroke-width="1.5"/><circle cx="269.4" cy="1052.4" r="2.1" fill="#cfd8e2"/><path d="M252 1054.6L260.6 1058.2C261.8 1057.4 263.2 1057.4 264.2 1057.8L267 1053.6L270.6 1056.4L266.6 1059.6C266.6 1062.4 263.8 1064 261.6 1063.2C260.4 1062.8 259.6 1061.8 259.4 1060.8L252.4 1058C252 1056.8 251.9 1055.8 252 1054.6Z" fill="#eef2f6"/><circle cx="263" cy="1060.4" r="2" fill="none" stroke="#1a4f88" stroke-width=".8"/></g><g><path d="M315.4 1044.6H332.6C334.4 1044.6 335.6 1045.8 335.6 1047.6V1069.6L331.4 1065.4H315.4C313.6 1065.4 312.3 1064.2 312.3 1062.4V1047.6C312.3 1045.8 313.6 1044.6 315.4 1044.6Z" fill="#7289da"/><path d="M318.6 1050.6C320 1049.8 321.2 1049.5 322.2 1049.4L322.6 1050.2C323.6 1050.1 324.6 1050.1 325.4 1050.2L325.8 1049.4C326.8 1049.5 328.2 1049.8 329.4 1050.6C331 1053 331.8 1056 331.6 1059.4C330.4 1060.4 329 1060.9 327.8 1061.2L327 1059.9C327.5 1059.7 328 1059.5 328.4 1059.2C325.8 1060.3 322.4 1060.3 319.6 1059.2C320 1059.5 320.5 1059.7 321 1059.9L320.2 1061.2C319 1060.9 317.6 1060.4 316.4 1059.4C316.2 1056 317 1053 318.6 1050.6Z" fill="#fff"/><ellipse cx="321.4" cy="1055.8" rx="1.3" ry="1.5" fill="#7289da"/><ellipse cx="326.6" cy="1055.8" rx="1.3" ry="1.5" fill="#7289da"/></g><g><circle cx="382.5" cy="1056" r="13.6" fill="#1ed760"/><g fill="none" stroke="#0d0a14" stroke-linecap="round"><path d="M374.6 1051.6C380 1050 386.4 1050.6 391 1053.2" stroke-width="2.5"/><path d="M375.4 1056.2C380 1055 385.4 1055.4 389.4 1057.8" stroke-width="2.1"/><path d="M376.2 1060.6C380 1059.6 384.4 1060 387.8 1062" stroke-width="1.8"/></g></g><g><path d="M430 1041.8H453V1064.6C453 1065.6 452.6 1066.2 451.8 1066.6L441.5 1070L431.2 1066.6C430.4 1066.2 430 1065.6 430 1064.6Z" fill="#060606"/><text x="441.5" y="1056.4" font-family="Liberation Sans, sans-serif" font-weight="bold" font-size="13.5" text-anchor="middle" fill="#fff" textLength="18.5" lengthAdjust="spacingAndGlyphs">EPIC</text><text x="441.5" y="1061.6" font-family="Liberation Sans, sans-serif" font-weight="bold" font-size="4" text-anchor="middle" fill="#e8e8e8" textLength="13" lengthAdjust="spacingAndGlyphs">GAMES</text><path d="M437.6 1065.4C440 1066.6 443 1066.6 445.4 1065.4" fill="none" stroke="#fff" stroke-width="1"/></g><g fill="#865fc5"><path d="M504.2 1044L512.4 1041.2L515.1 1042.6V1066.8L507.6 1070.4L504.2 1069.2Z"/><path d="M485.9 1063L504.2 1066.4V1069.2L507.6 1070.4L486.4 1064.6Z"/><path d="M487.6 1049.4L490 1048.2L504 1058.6V1062L499.6 1062.4L487.6 1052.4ZM487.6 1059.6V1052L490.6 1054.4V1057.4ZM504 1046.2V1050L490.2 1061.2L487.6 1060L487.6 1058.6L499.8 1047.2Z" /></g><path d="M499.4 1051.2V1057.6L495.4 1054.4Z" fill="#0d0a14"/><g><path d="M548.4 1050L556.4 1050.2L552.6 1046.6C551.6 1045.4 553.2 1043.8 554.6 1044.8L566.4 1052.4C570.6 1053.4 573.2 1056.6 572.8 1060C572.2 1064.6 567.8 1067.4 563 1067.2C558.4 1067 554.4 1064.4 553.8 1060.6L547.4 1064.6C545.8 1065.4 544.4 1063.6 545.8 1062.4L555.6 1054.4L548.4 1054C546 1053.6 546 1050 548.4 1050Z" fill="#f5871f"/><circle cx="563.4" cy="1058.4" r="5.4" fill="#fff"/><circle cx="563.6" cy="1058.4" r="3.2" fill="#0f55a4"/></g><g><path d="M607.4 1043.2H630.2V1063.6H605.8V1044.8C605.8 1043.8 606.4 1043.2 607.4 1043.2Z" fill="#262626" stroke="#7a7a7a" stroke-width="1.6"/><path d="M605.8 1064.8H630.2" stroke="#5c5c5c" stroke-width="2.4"/><path d="M609 1059.6C612 1058.8 613.4 1057.6 615 1055.4C616.8 1052.4 620 1049 628.6 1048.6V1051.6C622.6 1052.2 620.6 1054.6 619.4 1056.6C618.2 1058.8 616.4 1060.8 612.4 1062.4L609 1062.4Z" fill="#8a8a8a"/><path d="M628.6 1053.6C624.4 1054.2 622.8 1056 622.2 1058C622 1059.4 622.8 1060.6 624.6 1060.8L628.6 1060.6V1058.4H625.2C625.4 1057.2 626.6 1056.4 628.6 1056.2Z" fill="#8a8a8a"/></g><g><rect x="664.5" y="1043.1" width="24.3" height="22" fill="#0a0a4a" stroke="#86b2f6" stroke-width="1.4"/><text x="669" y="1059.8" font-family="Liberation Sans, sans-serif" font-weight="bold" font-size="15" fill="#86b2f6" textLength="15.4" lengthAdjust="spacingAndGlyphs">Ps</text></g><g><circle cx="735.5" cy="1055.6" r="12.6" fill="#2a2a2a" stroke="#d4d4d4" stroke-width="1.3"/><path transform="translate(722.6 1042.2) scale(.89)" d="M1 16.5C3.5 11 7.5 6 12.5 3.4C11.8 5 12 6.5 13.2 7.6L13.2 20.5C14.5 21.8 16.5 21.8 18.3 20.6L18.3 9C17.8 8.3 17 7.9 16.4 7.7C19.5 7.2 23 5.8 26 3.8C24 6 23 8 23 10L23 20.5C23.5 21.5 24.5 21 27.8 18.4C26 22 23.5 24.5 21 25.7L18.6 24.3L14.6 26.6L7 22.6C8 22 8.4 21.2 8.4 20L8.4 10.5C8.4 9.5 7.8 9.3 7 9.6C5 10.5 3 13 1 16.5Z" fill="#fff"/></g><g><circle cx="794.4" cy="1055.6" r="14" fill="url(#gPic)"/><path d="M783 1050.6C784.6 1046.6 788 1043.8 792 1043L797.6 1048.4L788.6 1056.6L783 1058.4C782.4 1055.8 782.4 1053 783 1050.6Z" fill="#a55fd6"/><path d="M793.4 1042.8C797 1042.4 800.6 1043.6 803.2 1045.8V1054.6L794 1045.4Z" fill="#ee4250"/><path d="M804.4 1046.8C806.8 1049.6 807.8 1053.4 807.2 1057.2L803.4 1061.4L801.2 1060.8V1047Z" fill="#ff9a16"/><path d="M806.6 1059.2C805.2 1064 801 1067.6 796 1068.4C793.4 1068.6 791.6 1068.2 790 1067.6V1059.2Z" fill="#1f9e2c"/><path d="M788.6 1066.8C786 1065.4 784 1063 783.2 1060.2L788.6 1057.6Z" fill="#1565d8"/></g><g fill="none" stroke="#ffffff" stroke-width="1.3"><circle cx="1660.8" cy="1049.6" r="2.9"/><path d="M1655.8 1058.6C1656.4 1053.6 1664.6 1053 1666 1057.4"/><circle cx="1653.6" cy="1056.2" r="2.9"/><path d="M1648.4 1064.4C1649 1059 1657.6 1059 1658.6 1064.4"/></g><path d="M1693.4 1060L1700.2 1053.2L1707 1060" fill="none" stroke="#ffffff" stroke-width="1.5"/><g fill="none" stroke="#ffffff" stroke-width="1.2"><rect x="1723.6" y="1049.6" width="15" height="9.6"/><path d="M1731 1059.2V1063.4M1726 1063.6H1736"/><rect x="1720" y="1049.2" width="4.6" height="4.4" fill="#0d0a14"/><path d="M1722.2 1053.6V1063.6"/></g><g fill="none" stroke="#ffffff" stroke-width="1.2"><path d="M1748.6 1053.6H1751.6L1755.6 1049.6V1063.2L1751.6 1059.2H1748.6Z"/><path d="M1758 1053.6C1759.4 1055.2 1759.4 1057.6 1758 1059.2"/><path d="M1760.6 1051.4C1763 1054.4 1763 1058.4 1760.6 1061.4"/><path d="M1763.4 1049.2C1766.8 1053.4 1766.8 1059.4 1763.4 1063.6" stroke="#777"/></g><path d="M1871.6 1047.4H1889.4V1060.8H1883.6L1880.6 1064L1877.6 1060.8H1871.6Z" fill="none" stroke="#ffffff" stroke-width="1.4"/></svg>
</div></body></html>
